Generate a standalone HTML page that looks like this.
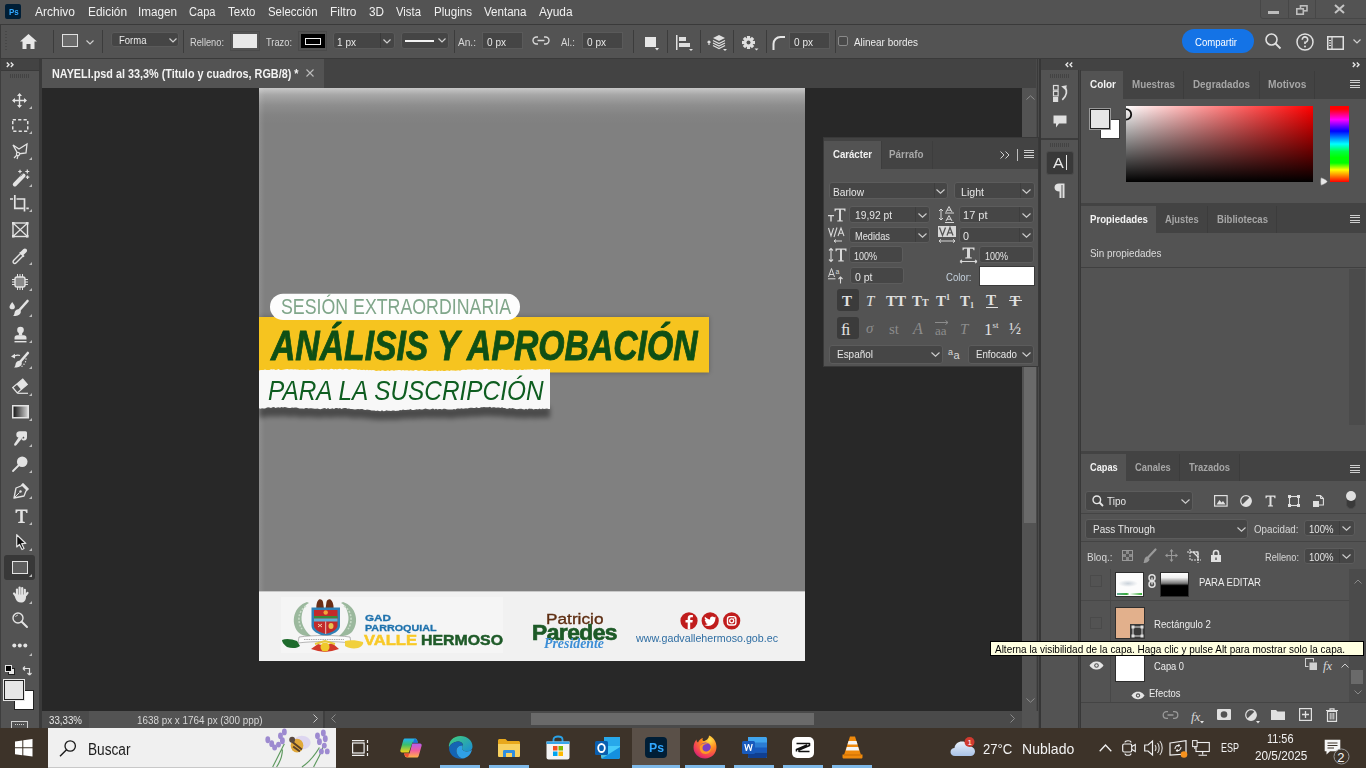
<!DOCTYPE html>
<html><head><meta charset="utf-8">
<style>
*{margin:0;padding:0;box-sizing:border-box}
html,body{width:1366px;height:768px;overflow:hidden;background:#535353;font-family:"Liberation Sans",sans-serif;color:#e6e6e6}
.a{position:absolute}
.t{position:absolute;white-space:nowrap}
svg{position:absolute;overflow:visible}
.sep{position:absolute;top:30px;width:1px;height:23px;background:#3c3c3c}
.fld{position:absolute;top:32px;height:15px;background:#454545;border:1px solid #5a5a5a;border-radius:3px}
.fld2{position:absolute;top:32px;height:17px;background:#454545;border:1px solid #5a5a5a}
.ot{color:#e8e8e8}
.ol{color:#d6d6d6}
.dd{background:#464646;border:1px solid #5c5c5c}
.mi{color:#f0f0f0}
</style></head><body>

<!-- MENU BAR -->
<div class="a" style="left:0;top:0;width:1366px;height:23px;background:#535353"></div>
<div class="a" style="left:0;top:24px;width:1366px;height:1px;background:#3a3a3a"></div>
<div class="a" style="left:5px;top:4px;width:16px;height:15px;background:#001e36;border-radius:2px"></div>
<div class="t" style="top:7.70px;font-size:8.5px;line-height:1;left:8.5px;font-weight:bold;color:#31a8ff;transform:scaleX(0.9417);transform-origin:0 0">Ps</div>


<div class="t mi" style="top:6.42px;font-size:12.5px;line-height:1;left:35px;transform:scaleX(0.9595);transform-origin:0 0">Archivo</div><div class="t mi" style="top:6.42px;font-size:12.5px;line-height:1;left:87.5px;transform:scaleX(0.9512);transform-origin:0 0">Edición</div><div class="t mi" style="top:6.42px;font-size:12.5px;line-height:1;left:137.5px;transform:scaleX(0.9352);transform-origin:0 0">Imagen</div><div class="t mi" style="top:6.42px;font-size:12.5px;line-height:1;left:189px;transform:scaleX(0.8866);transform-origin:0 0">Capa</div><div class="t mi" style="top:6.42px;font-size:12.5px;line-height:1;left:228px;transform:scaleX(0.9200);transform-origin:0 0">Texto</div><div class="t mi" style="top:6.42px;font-size:12.5px;line-height:1;left:268px;transform:scaleX(0.9132);transform-origin:0 0">Selección</div><div class="t mi" style="top:6.42px;font-size:12.5px;line-height:1;left:330px;transform:scaleX(0.9539);transform-origin:0 0">Filtro</div><div class="t mi" style="top:6.42px;font-size:12.5px;line-height:1;left:369px;transform:scaleX(0.9384);transform-origin:0 0">3D</div><div class="t mi" style="top:6.42px;font-size:12.5px;line-height:1;left:396px;transform:scaleX(0.9065);transform-origin:0 0">Vista</div><div class="t mi" style="top:6.42px;font-size:12.5px;line-height:1;left:434px;transform:scaleX(0.9268);transform-origin:0 0">Plugins</div><div class="t mi" style="top:6.42px;font-size:12.5px;line-height:1;left:484px;transform:scaleX(0.9261);transform-origin:0 0">Ventana</div><div class="t mi" style="top:6.42px;font-size:12.5px;line-height:1;left:539px;transform:scaleX(0.9512);transform-origin:0 0">Ayuda</div>
<!-- OPTIONS BAR -->
<div class="a" style="left:0;top:25px;width:1366px;height:33px;background:#535353"></div><div class="a" style="left:0;top:25px;width:1px;height:33px;background:#3a3a3a"></div>
<div class="a" style="left:0;top:58px;width:1366px;height:1px;background:#3a3a3a"></div>


<!-- options content -->
<div class="a" style="left:5px;top:31px;width:2px;height:20px;background:repeating-linear-gradient(#474747 0 1px,transparent 1px 3px)"></div>
<svg style="left:20px;top:34px" width="17" height="15" viewBox="0 0 17 15"><path d="M8.5 0 L17 7.5 L14.5 7.5 L14.5 15 L10.5 15 L10.5 10 L6.5 10 L6.5 15 L2.5 15 L2.5 7.5 L0 7.5 Z" fill="#e8e8e8"/></svg>
<div class="sep" style="left:53px"></div>
<div class="a" style="left:62px;top:34px;width:16px;height:13px;border:1.5px solid #e0e0e0;background:#6a6a6a"></div>
<svg style="left:86px;top:40px" width="8" height="5"><path d="M0.5 0.5 L4 4 L7.5 0.5" stroke="#cfcfcf" stroke-width="1.2" fill="none"/></svg>
<div class="sep" style="left:102px"></div>
<div class="fld" style="left:111px;width:68px"></div>
<div class="t ot" style="top:35.19px;font-size:11px;line-height:1;left:119px;color:#eaeaea;transform:scaleX(0.8653);transform-origin:0 0">Forma</div>
<svg style="left:169px;top:38px" width="8" height="5"><path d="M0.5 0.5 L4 4 L7.5 0.5" stroke="#cfcfcf" stroke-width="1.2" fill="none"/></svg>
<div class="sep" style="left:183px"></div>
<div class="t ol" style="top:36.69px;font-size:11px;line-height:1;left:190px;transform:scaleX(0.8424);transform-origin:0 0">Relleno:</div>
<div class="a" style="left:230px;top:31px;width:30px;height:20px;border:1px solid #4a4a4a;background:#535353"></div>
<div class="a" style="left:233px;top:34px;width:24px;height:14px;background:#e8e8e8"></div>
<div class="t ol" style="top:36.69px;font-size:11px;line-height:1;left:266px;transform:scaleX(0.8451);transform-origin:0 0">Trazo:</div>
<div class="a" style="left:298px;top:31px;width:29px;height:20px;border:1px solid #4a4a4a"></div>
<div class="a" style="left:301px;top:34px;width:24px;height:14px;background:#000"></div>
<div class="a" style="left:305px;top:38px;width:16px;height:7px;border:1.5px solid #f0f0f0"></div>
<div class="fld" style="left:333px;width:62px;top:32px;height:17px"></div>
<div class="a" style="left:380px;top:33px;width:1px;height:15px;background:#3a3a3a"></div>
<div class="t ot" style="top:36.69px;font-size:11px;line-height:1;left:337px;transform:scaleX(0.9136);transform-origin:0 0">1 px</div>
<svg style="left:383px;top:39px" width="8" height="5"><path d="M0.5 0.5 L4 4 L7.5 0.5" stroke="#cfcfcf" stroke-width="1.2" fill="none"/></svg>
<div class="fld" style="left:401px;width:48px;top:32px;height:17px"></div>
<div class="a" style="left:405px;top:40px;width:29px;height:2px;background:#f2f2f2"></div>
<svg style="left:438px;top:38px" width="8" height="5"><path d="M0.5 0.5 L4 4 L7.5 0.5" stroke="#cfcfcf" stroke-width="1.2" fill="none"/></svg>
<div class="sep" style="left:454px"></div>
<div class="t ol" style="top:36.69px;font-size:11px;line-height:1;left:458px;transform:scaleX(0.9194);transform-origin:0 0">An.:</div>
<div class="fld2" style="left:482px;width:41px"></div>
<div class="t ot" style="top:36.69px;font-size:11px;line-height:1;left:487px;transform:scaleX(0.9136);transform-origin:0 0">0 px</div>
<svg style="left:533px;top:36px" width="16" height="9" viewBox="0 0 16 9"><path d="M5 1 H3.5 A3.5 3.5 0 0 0 3.5 8 H5 M11 1 H12.5 A3.5 3.5 0 0 1 12.5 8 H11 M4.5 4.5 H11.5" stroke="#d8d8d8" stroke-width="1.4" fill="none"/></svg>
<div class="t ol" style="top:36.69px;font-size:11px;line-height:1;left:561px;transform:scaleX(0.8802);transform-origin:0 0">Al.:</div>
<div class="fld2" style="left:582px;width:41px"></div>
<div class="t ot" style="top:36.69px;font-size:11px;line-height:1;left:587px;transform:scaleX(0.9136);transform-origin:0 0">0 px</div>
<div class="sep" style="left:633px"></div>
<div class="a" style="left:645px;top:37px;width:11px;height:10px;background:#e6e6e6"></div>
<svg style="left:655px;top:48px" width="4" height="3"><path d="M0 0H4L2 2.5Z" fill="#e6e6e6"/></svg>
<div class="sep" style="left:667px"></div>
<svg style="left:676px;top:35px" width="17" height="16" viewBox="0 0 17 16"><rect x="0" y="0" width="1.5" height="15" fill="#e0e0e0"/><rect x="3" y="2" width="7" height="4" fill="#e0e0e0"/><rect x="3" y="8" width="11" height="4" fill="#e0e0e0"/><path d="M13 14H17L15 16Z" fill="#e0e0e0"/></svg>
<div class="sep" style="left:700px"></div>
<svg style="left:707px;top:34px" width="20" height="17" viewBox="0 0 20 17"><path d="M2 7 L2 11 M0.5 8.5 L2 7 L3.5 8.5" stroke="#e0e0e0" stroke-width="1.2" fill="none"/><path d="M12 1 L18 4 L12 7 L6 4 Z" fill="#e0e0e0"/><path d="M6 6.5 L12 9.5 L18 6.5 M6 9 L12 12 L18 9 M6 11.5 L12 14.5 L18 11.5" stroke="#e0e0e0" stroke-width="1.2" fill="none"/><path d="M16 15H20L18 17Z" fill="#e0e0e0"/></svg>
<div class="sep" style="left:733px"></div>
<svg style="left:742px;top:36px" width="17" height="15" viewBox="0 0 17 15"><g transform="translate(6.5,6.5)" fill="#e0e0e0"><circle r="4.6"/><rect x="-1.6" y="-6.5" width="3.2" height="13"/><rect x="-6.5" y="-1.6" width="13" height="3.2"/><rect x="-1.6" y="-6.5" width="3.2" height="13" transform="rotate(45)"/><rect x="-1.6" y="-6.5" width="3.2" height="13" transform="rotate(-45)"/></g><circle cx="6.5" cy="6.5" r="2" fill="#535353"/><path d="M12.5 12.5H16.5L14.5 14.5Z" fill="#e0e0e0"/></svg>
<div class="sep" style="left:766px"></div>
<svg style="left:772px;top:35px" width="14" height="15" viewBox="0 0 14 15"><path d="M1.5 15 V9 A7 7 0 0 1 8.5 2 H13" stroke="#e6e6e6" stroke-width="2" fill="none"/></svg>
<div class="fld2" style="left:789px;width:41px"></div>
<div class="t ot" style="top:36.69px;font-size:11px;line-height:1;left:794px;transform:scaleX(0.9136);transform-origin:0 0">0 px</div>
<div class="sep" style="left:835px"></div>
<div class="a" style="left:838px;top:36px;width:10px;height:10px;border:1px solid #8a8a8a;border-radius:2px;background:#4a4a4a"></div>
<div class="t ol" style="top:36.69px;font-size:11px;line-height:1;left:854px;color:#ececec;transform:scaleX(0.9022);transform-origin:0 0">Alinear bordes</div>
<div class="a" style="left:1182px;top:29px;width:72px;height:24px;background:#1473e6;border-radius:12px"></div>
<div class="t" style="top:36.69px;font-size:11px;line-height:1;left:1195px;color:#fff;transform:scaleX(0.8696);transform-origin:0 0">Compartir</div>
<svg style="left:1265px;top:33px" width="17" height="17" viewBox="0 0 17 17"><circle cx="6.5" cy="6.5" r="5.5" stroke="#e0e0e0" stroke-width="1.6" fill="none"/><path d="M10.5 10.5 L15.5 15.5" stroke="#e0e0e0" stroke-width="1.8"/></svg>
<svg style="left:1296px;top:33px" width="18" height="18" viewBox="0 0 18 18"><circle cx="9" cy="9" r="8" stroke="#e0e0e0" stroke-width="1.5" fill="none"/><path d="M6.3 6.8 A2.7 2.7 0 1 1 9 9.3 V11" stroke="#e0e0e0" stroke-width="1.6" fill="none"/><circle cx="9" cy="13.4" r="1" fill="#e0e0e0"/></svg>
<svg style="left:1327px;top:36px" width="17" height="14" viewBox="0 0 17 14"><rect x="0.75" y="0.75" width="15.5" height="12.5" stroke="#e0e0e0" stroke-width="1.5" fill="none"/><path d="M5 1V13" stroke="#e0e0e0" stroke-width="1.2"/><rect x="2" y="4" width="2" height="1" fill="#e0e0e0"/><rect x="2" y="6.5" width="2" height="1" fill="#e0e0e0"/><rect x="2" y="9" width="2" height="1" fill="#e0e0e0"/></svg>
<svg style="left:1353px;top:39px" width="8" height="5"><path d="M0.5 0.5 L4 4 L7.5 0.5" stroke="#cfcfcf" stroke-width="1.2" fill="none"/></svg>
<!-- window controls -->
<div class="a" style="left:1260px;top:-1px;width:107px;height:20px;border:1px solid #474747;border-radius:0 0 0 3px"></div>
<div class="a" style="left:1288px;top:0;width:1px;height:18px;background:#474747"></div>
<div class="a" style="left:1315px;top:0;width:1px;height:18px;background:#474747"></div>
<div class="a" style="left:1268px;top:11px;width:11px;height:3px;background:#bdbdbd"></div>
<svg style="left:1296px;top:5px" width="12" height="10" viewBox="0 0 12 10"><rect x="4.5" y="0.8" width="6.5" height="5" stroke="#bdbdbd" stroke-width="1.6" fill="none"/><rect x="0.8" y="3.8" width="6.5" height="5.4" stroke="#bdbdbd" stroke-width="1.6" fill="#535353"/></svg>
<svg style="left:1334px;top:4px" width="11" height="10" viewBox="0 0 11 10"><path d="M1 1 L10 9 M10 1 L1 9" stroke="#c4c4c4" stroke-width="2"/></svg>

<!-- TOOLBAR -->
<div class="a" style="left:0;top:59px;width:41px;height:669px;background:#535353"></div><div class="a" style="left:0;top:59px;width:1px;height:669px;background:#3e3e3e"></div>
<div class="a" style="left:1px;top:59px;width:39px;height:11px;background:#434343"></div><div class="a" style="left:1px;top:70px;width:39px;height:1px;background:#3a3a3a"></div>
<div class="a" style="left:39px;top:59px;width:3px;height:669px;background:#3a3a3a"></div>

<svg style="left:5.5px;top:61.8px" width="9" height="6" viewBox="0 0 9 6"><path d="M0.8 0.6L3 2.8L0.8 5M4.8 0.6L7 2.8L4.8 5" stroke="#e8e8e8" stroke-width="1.4" fill="none"/></svg>
<div class="a" style="left:10px;top:74px;width:20px;height:4px;background:repeating-linear-gradient(90deg,#434343 0 1px,transparent 1px 2px)"></div>
<svg style="left:12px;top:93px" width="16" height="16" viewBox="0 0 16 16"><path d="M7.5 1V14M1 7.5H14" stroke="#e3e3e3" stroke-width="1.4"/><path d="M7.5 0L10 3H5Z M7.5 15L10 12H5Z M0 7.5L3 5V10Z M15 7.5L12 5V10Z" fill="#e3e3e3"/></svg><svg style="left:29px;top:106px" width="3" height="3"><path d="M3 0V3H0Z" fill="#bdbdbd"/></svg>
<svg style="left:12px;top:119px" width="17" height="14" viewBox="0 0 17 14"><rect x="0.75" y="0.75" width="15" height="11.5" stroke="#e3e3e3" stroke-width="1.5" fill="none" stroke-dasharray="3.2 2.2"/></svg><svg style="left:29px;top:131px" width="3" height="3"><path d="M3 0V3H0Z" fill="#bdbdbd"/></svg>
<svg style="left:12px;top:143px" width="17" height="17" viewBox="0 0 17 17"><path d="M1 2 L7 6 L15 1 L14 10 L6 11 L1 2Z" stroke="#e3e3e3" stroke-width="1.3" fill="none"/><circle cx="6" cy="11" r="1.6" stroke="#e3e3e3" stroke-width="1.2" fill="#535353"/><path d="M5 12 L2 15 M6 13 L5 16" stroke="#e3e3e3" stroke-width="1.2"/></svg><svg style="left:29px;top:157px" width="3" height="3"><path d="M3 0V3H0Z" fill="#bdbdbd"/></svg>
<svg style="left:12px;top:169px" width="18" height="18" viewBox="0 0 18 18"><path d="M2.8 15.5 L11.5 6.5" stroke="#e3e3e3" stroke-width="4" stroke-linecap="round"/><path d="M8.5 7.5 L10.8 5.2" stroke="#8a8a8a" stroke-width="1"/><path d="M8 0.8v3.5M6.2 2.5h3.5M15.3 0.5v4M13.3 2.5h4M15.5 6.5v3.5M13.8 8.2h3.5" stroke="#e3e3e3" stroke-width="1.2"/></svg><svg style="left:29px;top:184px" width="3" height="3"><path d="M3 0V3H0Z" fill="#bdbdbd"/></svg>
<svg style="left:10px;top:195px" width="19" height="17" viewBox="0 0 19 17"><path d="M0 4H3M4.8 0V13.4H13.5M6.5 4H14.5V16.5M16.3 13.4H18.8" stroke="#e3e3e3" stroke-width="1.7" fill="none"/></svg><svg style="left:29px;top:209px" width="3" height="3"><path d="M3 0V3H0Z" fill="#bdbdbd"/></svg>
<svg style="left:12px;top:222px" width="17" height="16" viewBox="0 0 17 16"><rect x="1" y="1" width="14.5" height="13.5" stroke="#e3e3e3" stroke-width="1.4" fill="none"/><path d="M1 1L15.5 14.5M15.5 1L1 14.5" stroke="#e3e3e3" stroke-width="1.2"/><rect x="0" y="0" width="2.5" height="2.5" fill="#e3e3e3"/><rect x="14" y="0" width="2.5" height="2.5" fill="#e3e3e3"/><rect x="0" y="13" width="2.5" height="2.5" fill="#e3e3e3"/><rect x="14" y="13" width="2.5" height="2.5" fill="#e3e3e3"/></svg>
<svg style="left:12px;top:248px" width="16" height="17" viewBox="0 0 16 17"><path d="M8.8 5.2 L1.8 12.2 C1 13 1 14.2 1.5 15 C2.3 15.6 3.5 15.5 4.2 14.8 L11.2 7.8" stroke="#e3e3e3" stroke-width="1.4" fill="none"/><path d="M7.2 4.8 L11.5 9.2 L12.6 8.1 L11.5 7 L14.3 4.2 C15.3 3.2 15.3 1.8 14.4 1 C13.5 0.1 12.1 0.2 11.2 1.2 L8.5 3.9 L8.3 3.7Z" fill="#e3e3e3"/></svg><svg style="left:29px;top:262px" width="3" height="3"><path d="M3 0V3H0Z" fill="#bdbdbd"/></svg>
<svg style="left:12px;top:274px" width="16" height="16" viewBox="0 0 16 16"><rect x="3" y="3" width="10" height="10" rx="2" fill="#8a8a8a" stroke="#e3e3e3" stroke-width="1.4"/><path d="M5.5 0v3M8 0v3M10.5 0v3M5.5 13v3M8 13v3M10.5 13v3M0 5.5h3M0 8h3M0 10.5h3M13 5.5h3M13 8h3M13 10.5h3" stroke="#e3e3e3" stroke-width="1"/></svg><svg style="left:29px;top:288px" width="3" height="3"><path d="M3 0V3H0Z" fill="#bdbdbd"/></svg>
<svg style="left:9px;top:300px" width="20" height="17" viewBox="0 0 20 17"><path d="M3.2 2 C1.3 4.5 0.5 6 0.5 7 C0.5 8.4 1.7 9.3 3.2 9.3 C4.7 9.3 5.9 8.4 5.9 7 C5.9 6 5.1 4.5 3.2 2Z" fill="#e3e3e3"/><path d="M18.5 1 L10.5 10" stroke="#e3e3e3" stroke-width="2.6" stroke-linecap="round"/><path d="M9.5 9.2 C7 9.2 5.8 11 5.5 13 C5.3 14.5 4.8 15.5 4 16 C7.5 16.5 11.5 15 11.8 12 C12 10.5 11 9.2 9.5 9.2Z" fill="#e3e3e3"/></svg><svg style="left:29px;top:314px" width="3" height="3"><path d="M3 0V3H0Z" fill="#bdbdbd"/></svg>
<svg style="left:13px;top:326px" width="15" height="17" viewBox="0 0 15 17"><circle cx="7.5" cy="4" r="3.3" fill="#e3e3e3"/><rect x="5.8" y="5" width="3.4" height="4.5" fill="#e3e3e3"/><path d="M1.5 12 C1.5 10.2 2.5 9.3 4 9.3 H11 C12.5 9.3 13.5 10.2 13.5 12 V13.5 H1.5Z" fill="#e3e3e3"/><rect x="1.5" y="15" width="12" height="1.4" fill="#e3e3e3"/></svg><svg style="left:29px;top:340px" width="3" height="3"><path d="M3 0V3H0Z" fill="#bdbdbd"/></svg>
<svg style="left:10px;top:352px" width="19" height="16" viewBox="0 0 19 16"><path d="M1 4.5 L5 1.8 L5 6.5Z" fill="#e3e3e3"/><path d="M4.5 4 C6.5 3 8.5 3 10 3.5" stroke="#e3e3e3" stroke-width="1.3" fill="none"/><path d="M17.8 1 L10.5 9.5" stroke="#e3e3e3" stroke-width="2.6" stroke-linecap="round"/><path d="M9.5 8.8 C7 8.8 5.8 10.6 5.5 12.6 C5.3 14 4.8 15 4 15.5 C7.5 16 11.5 14.5 11.8 11.6 C12 10.1 11 8.8 9.5 8.8Z" fill="#e3e3e3"/><circle cx="16" cy="7" r="0.7" fill="#e3e3e3"/><circle cx="15.5" cy="9.8" r="0.7" fill="#e3e3e3"/><circle cx="14" cy="12.3" r="0.7" fill="#e3e3e3"/><circle cx="12" cy="14.3" r="0.7" fill="#e3e3e3"/></svg><svg style="left:29px;top:366px" width="3" height="3"><path d="M3 0V3H0Z" fill="#bdbdbd"/></svg>
<svg style="left:12px;top:379px" width="17" height="16" viewBox="0 0 17 16"><g transform="rotate(-40 8 7)"><rect x="1.5" y="3.5" width="13" height="7" stroke="#e3e3e3" stroke-width="1.3" fill="none"/><rect x="6.5" y="3.5" width="8" height="7" fill="#e3e3e3"/></g><path d="M5.5 14.3H16" stroke="#e3e3e3" stroke-width="1.2"/></svg><svg style="left:29px;top:393px" width="3" height="3"><path d="M3 0V3H0Z" fill="#bdbdbd"/></svg>
<svg style="left:12px;top:405px" width="17" height="14" viewBox="0 0 17 14"><defs><linearGradient id="gg" x1="0" y1="0" x2="1" y2="0"><stop offset="0" stop-color="#111"/><stop offset="1" stop-color="#d8d8d8"/></linearGradient></defs><rect x="0.75" y="0.75" width="15.5" height="12" fill="url(#gg)" stroke="#e3e3e3" stroke-width="1.5"/></svg><svg style="left:29px;top:418px" width="3" height="3"><path d="M3 0V3H0Z" fill="#bdbdbd"/></svg>
<svg style="left:13px;top:431px" width="15" height="16" viewBox="0 0 15 16"><path d="M3.5 2 C4.5 0.5 6 0.3 8 0.3 H12.5 C13.5 0.3 14 1 14 2 V6 C14 8 13 9.5 11 9.5 C10 9.5 9 9 8.5 8.5 L9.5 7 C10 7.5 10.5 7.8 11 7.5 C11.5 7 11.5 6 10.5 5.5 L3.5 14 C3 14.8 2 15 1.5 14.5 C1 14 1 13.2 1.5 12.5 L5.5 6.5 C4 6.5 2.8 5 3.5 2Z" fill="#e3e3e3"/></svg><svg style="left:29px;top:444px" width="3" height="3"><path d="M3 0V3H0Z" fill="#bdbdbd"/></svg>
<svg style="left:12px;top:456px" width="16" height="16" viewBox="0 0 16 16"><circle cx="10.2" cy="5.8" r="5.3" fill="#e3e3e3"/><path d="M6.5 9.5 L1 15" stroke="#e3e3e3" stroke-width="1.8" stroke-linecap="round"/></svg><svg style="left:29px;top:470px" width="3" height="3"><path d="M3 0V3H0Z" fill="#bdbdbd"/></svg>
<svg style="left:13px;top:483px" width="16" height="16" viewBox="0 0 16 16"><path d="M10 0.8 L15.2 6 L13 8 L11 13 L1 15 L3 5 L8 3Z" stroke="#e3e3e3" stroke-width="1.3" fill="none" stroke-linejoin="round"/><path d="M10 0.8 L15.2 6 L13.5 7.5 L8.5 2.5Z" fill="#e3e3e3"/><path d="M1.5 14.5 L6.5 9.5" stroke="#e3e3e3" stroke-width="1"/><circle cx="7.5" cy="8.5" r="1.2" fill="#e3e3e3"/></svg><svg style="left:29px;top:496px" width="3" height="3"><path d="M3 0V3H0Z" fill="#bdbdbd"/></svg>
<svg style="left:15px;top:509px" width="13" height="14" viewBox="0 0 13 14"><path d="M0.5 0.5H12.5V4H11.3C11 2.3 10.3 2 8.5 2H7.8V12.5L9.8 13V14H3.2V13L5.2 12.5V2H4.5C2.7 2 2 2.3 1.7 4H0.5Z" fill="#e3e3e3"/></svg><svg style="left:29px;top:522px" width="3" height="3"><path d="M3 0V3H0Z" fill="#bdbdbd"/></svg>
<svg style="left:16px;top:534px" width="11" height="16" viewBox="0 0 11 16"><path d="M0.7 0.7 L0.7 13 L3.5 10.5 L6 15.5 L8 14.5 L5.7 9.7 L9.8 9.5Z" fill="#111" stroke="#e3e3e3" stroke-width="1.2" stroke-linejoin="round"/></svg><svg style="left:29px;top:548px" width="3" height="3"><path d="M3 0V3H0Z" fill="#bdbdbd"/></svg>
<div class="a" style="left:4px;top:555px;width:31px;height:25px;background:#383838;border-radius:3px"></div>
<div class="a" style="left:12px;top:561px;width:16px;height:13px;border:1.5px solid #e3e3e3;background:#5e5e5e"></div><svg style="left:29px;top:574px" width="3" height="3"><path d="M3 0V3H0Z" fill="#bdbdbd"/></svg>
<svg style="left:12px;top:586px" width="17" height="17" viewBox="0 0 17 17"><g stroke="#e3e3e3" stroke-width="2.2" stroke-linecap="round"><path d="M5 9V3.5"/><path d="M7.6 8.5V1.5"/><path d="M10.2 8.5V2"/><path d="M12.8 9V3.8"/><path d="M5 11L2 7.5"/></g><path d="M3.8 8.5 H14 V11 C14 14.5 12 16.5 9 16.5 C6 16.5 4.5 15 3.5 12.5 L2.5 9.5Z" fill="#e3e3e3"/><path d="M14 9 L15.5 6.8" stroke="#e3e3e3" stroke-width="2.2" stroke-linecap="round"/></svg><svg style="left:29px;top:601px" width="3" height="3"><path d="M3 0V3H0Z" fill="#bdbdbd"/></svg>
<svg style="left:12px;top:612px" width="16" height="16" viewBox="0 0 16 16"><circle cx="6" cy="6" r="5" stroke="#e3e3e3" stroke-width="1.4" fill="none"/><path d="M9.7 9.7 L15 15" stroke="#e3e3e3" stroke-width="2" stroke-linecap="round"/><path d="M3.5 5 A3 3 0 0 1 6 3" stroke="#e3e3e3" stroke-width="0.8" fill="none"/></svg>
<svg style="left:12px;top:643px" width="16" height="6" viewBox="0 0 16 6"><circle cx="2.3" cy="2.5" r="2" fill="#e3e3e3"/><circle cx="7.8" cy="2.5" r="2" fill="#e3e3e3"/><circle cx="13.3" cy="2.5" r="2" fill="#e3e3e3"/></svg><svg style="left:29px;top:653px" width="3" height="3"><path d="M3 0V3H0Z" fill="#bdbdbd"/></svg>
<div class="a" style="left:8px;top:668px;width:7px;height:7px;background:#e6e6e6;border:1px solid #222"></div><div class="a" style="left:5px;top:665px;width:7px;height:7px;background:#000;border:1px solid #e6e6e6"></div>
<svg style="left:22px;top:665px" width="11" height="11" viewBox="0 0 11 11"><path d="M1 3.5 H7.5 V10" stroke="#e0e0e0" stroke-width="1.2" fill="none"/><path d="M1 3.5 L3 1.5 M1 3.5 L3 5.5 M7.5 10 L5.5 8 M7.5 10 L9.5 8" stroke="#e0e0e0" stroke-width="1.2"/></svg>
<div class="a" style="left:14px;top:690px;width:20px;height:20px;background:#fff;border:1px solid #222"></div><div class="a" style="left:4px;top:680px;width:20px;height:20px;background:#e6e6e6;border:1px solid #222;outline:1px solid #e6e6e6"></div>
<div class="a" style="left:11px;top:721px;width:17px;height:10px;border:1px solid #d0d0d0;border-bottom:none"></div><div class="a" style="left:15px;top:724px;width:9px;height:4px;border-top:1px dotted #d0d0d0"></div>
<!-- TAB BAR -->
<div class="a" style="left:42px;top:59px;width:996px;height:29px;background:#434343"></div>
<div class="a" style="left:42px;top:59px;width:282px;height:29px;background:#535353"></div>


<div class="t" style="top:68.24px;font-size:12px;line-height:1;left:52px;color:#f2f2f2;font-weight:bold;transform:scaleX(0.9016);transform-origin:0 0">NAYELI.psd al 33,3% (Titulo y cuadros, RGB/8) *</div>
<svg style="left:306px;top:69px" width="8" height="8" viewBox="0 0 8 8"><path d="M0.5 0.5L7.5 7.5M7.5 0.5L0.5 7.5" stroke="#bdbdbd" stroke-width="1.1"/></svg>

<!-- PASTEBOARD -->
<div class="a" style="left:42px;top:88px;width:980px;height:623px;background:#282828"></div>

<!-- CANVAS -->

<div class="a" style="left:259px;top:88px;width:546px;height:573px;background:#808080;overflow:hidden">
 <div class="a" style="left:0;top:0;width:546px;height:40px;background:linear-gradient(#c8c8c8 0px,#a6a6a6 7px,#8e8e8e 17px,#838383 27px,#808080 36px)"></div>
 <div class="a" style="left:0;top:0;width:6px;height:573px;background:linear-gradient(90deg,rgba(255,255,255,0.10),rgba(255,255,255,0))"></div>
 <div class="a" style="left:0;top:204px;width:546px;height:14px;background:rgba(0,0,0,0)"></div>
 <svg style="left:0;top:0" width="546" height="573">
  <defs><filter id="sh" x="-10%" y="-30%" width="120%" height="160%"><feGaussianBlur stdDeviation="2.5"/></filter></defs>
  <rect x="0" y="229" width="450" height="56" fill="#000" opacity="0.25" filter="url(#sh)"/>
  <rect x="0" y="229" width="450" height="55.5" fill="#f6c41f"/>
  <polygon points="0.0,318.3 1.5,318.7 3.0,318.3 4.5,318.4 6.0,318.6 7.5,317.7 9.0,317.3 10.5,317.5 12.0,317.9 13.5,317.2 15.0,317.1 16.5,317.9 18.0,317.6 19.5,317.3 21.0,317.8 22.5,317.1 24.0,317.5 25.5,317.0 27.0,317.3 28.5,317.8 30.0,317.9 31.5,318.0 33.0,317.4 34.5,317.7 36.0,317.5 37.5,317.4 39.0,317.9 40.5,318.4 42.0,318.5 43.5,318.4 45.0,318.8 46.5,318.1 48.0,318.0 49.5,318.4 51.0,318.3 52.5,318.2 54.0,318.5 55.5,318.8 57.0,318.7 58.5,318.5 60.0,319.1 61.5,319.3 63.0,318.7 64.5,318.2 66.0,318.1 67.5,319.1 69.0,318.1 70.5,318.9 72.0,318.7 73.5,318.3 75.0,318.9 76.5,317.9 78.0,318.1 79.5,318.4 81.0,317.9 82.5,318.9 84.0,318.2 85.5,318.1 87.0,318.0 88.5,318.8 90.0,318.6 91.5,318.9 93.0,319.0 94.5,319.3 96.0,319.6 97.5,319.3 99.0,318.9 100.5,319.3 102.0,319.1 103.5,319.0 105.0,319.7 106.5,320.1 108.0,319.6 109.5,319.8 111.0,320.0 112.5,320.5 114.0,320.4 115.5,320.6 117.0,320.9 118.5,320.5 120.0,321.0 121.5,321.2 123.0,320.3 124.5,321.3 126.0,321.0 127.5,320.3 129.0,320.7 130.5,320.8 132.0,321.1 133.5,320.4 135.0,320.6 136.5,320.9 138.0,320.7 139.5,320.8 141.0,320.1 142.5,320.2 144.0,319.6 145.5,320.1 147.0,320.1 148.5,319.8 150.0,319.8 151.5,319.1 153.0,319.9 154.5,319.9 156.0,319.8 157.5,319.3 159.0,319.5 160.5,318.9 162.0,319.6 163.5,319.5 165.0,318.9 166.5,318.6 168.0,319.0 169.5,319.2 171.0,319.4 172.5,319.1 174.0,318.6 175.5,319.6 177.0,318.7 178.5,319.6 180.0,318.9 181.5,319.1 183.0,319.6 184.5,318.8 186.0,318.8 187.5,319.3 189.0,319.5 190.5,319.6 192.0,319.4 193.5,319.6 195.0,319.0 196.5,319.5 198.0,318.4 199.5,318.5 201.0,318.7 202.5,318.3 204.0,318.8 205.5,318.5 207.0,318.3 208.5,318.6 210.0,318.1 211.5,317.7 213.0,317.7 214.5,318.1 216.0,318.1 217.5,317.2 219.0,317.9 220.5,317.9 222.0,317.3 223.5,317.3 225.0,316.9 226.5,317.2 228.0,317.2 229.5,317.3 231.0,316.7 232.5,317.8 234.0,317.3 235.5,317.3 237.0,317.8 238.5,317.6 240.0,317.6 241.5,318.0 243.0,317.3 244.5,318.0 246.0,317.9 247.5,318.7 249.0,318.8 250.5,318.1 252.0,318.5 253.5,318.1 255.0,318.6 256.5,319.1 258.0,319.3 259.5,318.9 261.0,318.8 262.5,318.7 264.0,319.2 265.5,319.6 267.0,318.7 268.5,319.5 270.0,318.6 271.5,318.8 273.0,318.8 274.5,319.4 276.0,318.9 277.5,318.9 279.0,319.2 280.5,318.6 282.0,319.3 283.5,318.5 285.0,319.0 286.5,318.7 288.0,318.6 289.5,319.0 291.0,318.9 291.0,329.9 289.5,330.0 288.0,329.6 286.5,329.7 285.0,330.0 283.5,329.5 282.0,330.3 280.5,329.6 279.0,330.2 277.5,329.9 276.0,329.9 274.5,330.4 273.0,329.8 271.5,329.8 270.0,329.6 268.5,330.5 267.0,329.7 265.5,330.6 264.0,330.2 262.5,329.7 261.0,329.8 259.5,329.9 258.0,330.3 256.5,330.1 255.0,329.6 253.5,329.1 252.0,329.5 250.5,329.1 249.0,329.8 247.5,329.7 246.0,328.9 244.5,329.0 243.0,328.3 241.5,329.0 240.0,328.6 238.5,328.6 237.0,328.8 235.5,328.3 234.0,328.3 232.5,328.8 231.0,327.7 229.5,328.3 228.0,328.2 226.5,328.2 225.0,327.9 223.5,328.3 222.0,328.3 220.5,328.9 219.0,328.9 217.5,328.2 216.0,329.1 214.5,329.1 213.0,328.7 211.5,328.7 210.0,329.1 208.5,329.6 207.0,329.3 205.5,329.5 204.0,329.8 202.5,329.3 201.0,329.7 199.5,329.5 198.0,329.4 196.5,330.5 195.0,330.0 193.5,330.6 192.0,330.4 190.5,330.6 189.0,330.5 187.5,330.3 186.0,329.8 184.5,329.8 183.0,330.6 181.5,330.1 180.0,329.9 178.5,330.6 177.0,329.7 175.5,330.6 174.0,329.6 172.5,330.1 171.0,330.4 169.5,330.2 168.0,330.0 166.5,329.6 165.0,329.9 163.5,330.5 162.0,330.6 160.5,329.9 159.0,330.5 157.5,330.3 156.0,330.8 154.5,330.9 153.0,330.9 151.5,330.1 150.0,330.8 148.5,330.8 147.0,331.1 145.5,331.1 144.0,330.6 142.5,331.2 141.0,331.1 139.5,331.8 138.0,331.7 136.5,331.9 135.0,331.6 133.5,331.4 132.0,332.1 130.5,331.8 129.0,331.7 127.5,331.3 126.0,332.0 124.5,332.3 123.0,331.3 121.5,332.2 120.0,332.0 118.5,331.5 117.0,331.9 115.5,331.6 114.0,331.4 112.5,331.5 111.0,331.0 109.5,330.8 108.0,330.6 106.5,331.1 105.0,330.7 103.5,330.0 102.0,330.1 100.5,330.3 99.0,329.9 97.5,330.3 96.0,330.6 94.5,330.3 93.0,330.0 91.5,329.9 90.0,329.6 88.5,329.8 87.0,329.0 85.5,329.1 84.0,329.2 82.5,329.9 81.0,328.9 79.5,329.4 78.0,329.1 76.5,328.9 75.0,329.9 73.5,329.3 72.0,329.7 70.5,329.9 69.0,329.1 67.5,330.1 66.0,329.1 64.5,329.2 63.0,329.7 61.5,330.3 60.0,330.1 58.5,329.5 57.0,329.7 55.5,329.8 54.0,329.5 52.5,329.2 51.0,329.3 49.5,329.4 48.0,329.0 46.5,329.1 45.0,329.8 43.5,329.4 42.0,329.5 40.5,329.4 39.0,328.9 37.5,328.4 36.0,328.5 34.5,328.7 33.0,328.4 31.5,329.0 30.0,328.9 28.5,328.8 27.0,328.3 25.5,328.0 24.0,328.5 22.5,328.1 21.0,328.8 19.5,328.3 18.0,328.6 16.5,328.9 15.0,328.1 13.5,328.2 12.0,328.9 10.5,328.5 9.0,328.3 7.5,328.7 6.0,329.6 4.5,329.4 3.0,329.3 1.5,329.7 0.0,329.3" fill="#000" opacity="0.42" filter="url(#sh)"/>
  <polygon points="0.0,282.6 1.5,282.1 3.0,282.1 4.5,282.1 6.0,281.6 7.5,281.9 9.0,281.9 10.5,282.0 12.0,281.3 13.5,281.5 15.0,281.2 16.5,281.9 18.0,281.7 19.5,281.1 21.0,282.0 22.5,281.9 24.0,281.7 25.5,281.6 27.0,281.2 28.5,281.1 30.0,281.6 31.5,281.2 33.0,281.3 34.5,281.4 36.0,281.2 37.5,281.6 39.0,281.6 40.5,282.0 42.0,281.7 43.5,281.8 45.0,281.7 46.5,281.9 48.0,281.7 49.5,281.5 51.0,282.1 52.5,282.1 54.0,281.9 55.5,281.8 57.0,281.4 58.5,281.3 60.0,281.3 61.5,281.1 63.0,281.7 64.5,281.3 66.0,281.6 67.5,281.2 69.0,281.7 70.5,281.5 72.0,280.7 73.5,280.9 75.0,281.5 76.5,281.1 78.0,281.5 79.5,281.0 81.0,280.7 82.5,281.2 84.0,281.4 85.5,280.9 87.0,280.8 88.5,281.1 90.0,281.7 91.5,281.6 93.0,281.0 94.5,281.2 96.0,281.2 97.5,281.2 99.0,281.9 100.5,281.5 102.0,281.9 103.5,281.9 105.0,281.7 106.5,282.3 108.0,281.8 109.5,282.3 111.0,281.9 112.5,282.3 114.0,282.1 115.5,282.2 117.0,282.9 118.5,282.8 120.0,282.4 121.5,282.9 123.0,282.3 124.5,282.5 126.0,282.9 127.5,282.7 129.0,282.2 130.5,283.0 132.0,282.3 133.5,282.3 135.0,282.8 136.5,282.3 138.0,282.3 139.5,282.1 141.0,282.1 142.5,282.5 144.0,282.1 145.5,282.5 147.0,282.2 148.5,282.3 150.0,282.7 151.5,282.3 153.0,282.4 154.5,282.7 156.0,282.1 157.5,282.1 159.0,282.8 160.5,282.7 162.0,282.2 163.5,282.2 165.0,282.7 166.5,283.0 168.0,282.3 169.5,283.0 171.0,283.0 172.5,282.8 174.0,282.7 175.5,282.4 177.0,282.4 178.5,283.2 180.0,282.6 181.5,283.0 183.0,282.6 184.5,283.1 186.0,282.9 187.5,282.6 189.0,282.5 190.5,282.9 192.0,282.3 193.5,282.4 195.0,282.6 196.5,282.8 198.0,282.5 199.5,282.2 201.0,282.7 202.5,281.9 204.0,281.7 205.5,281.8 207.0,281.9 208.5,281.5 210.0,281.5 211.5,281.6 213.0,281.7 214.5,281.3 216.0,281.4 217.5,281.8 219.0,281.9 220.5,281.5 222.0,281.5 223.5,281.4 225.0,281.0 226.5,280.9 228.0,280.8 229.5,281.6 231.0,281.5 232.5,281.7 234.0,280.9 235.5,281.5 237.0,281.3 238.5,281.6 240.0,281.3 241.5,281.9 243.0,281.1 244.5,281.5 246.0,281.7 247.5,281.9 249.0,281.8 250.5,281.8 252.0,281.9 253.5,282.0 255.0,281.5 256.5,281.8 258.0,282.0 259.5,282.0 261.0,281.6 262.5,281.9 264.0,281.9 265.5,281.6 267.0,281.7 268.5,281.4 270.0,281.6 271.5,281.6 273.0,281.1 274.5,281.5 276.0,281.8 277.5,281.7 279.0,281.5 280.5,281.2 282.0,281.5 283.5,281.4 285.0,281.2 286.5,281.6 288.0,280.9 289.5,281.5 291.0,280.9 291.0,320.9 289.5,321.0 288.0,320.6 286.5,320.7 285.0,321.0 283.5,320.5 282.0,321.3 280.5,320.6 279.0,321.2 277.5,320.9 276.0,320.9 274.5,321.4 273.0,320.8 271.5,320.8 270.0,320.6 268.5,321.5 267.0,320.7 265.5,321.6 264.0,321.2 262.5,320.7 261.0,320.8 259.5,320.9 258.0,321.3 256.5,321.1 255.0,320.6 253.5,320.1 252.0,320.5 250.5,320.1 249.0,320.8 247.5,320.7 246.0,319.9 244.5,320.0 243.0,319.3 241.5,320.0 240.0,319.6 238.5,319.6 237.0,319.8 235.5,319.3 234.0,319.3 232.5,319.8 231.0,318.7 229.5,319.3 228.0,319.2 226.5,319.2 225.0,318.9 223.5,319.3 222.0,319.3 220.5,319.9 219.0,319.9 217.5,319.2 216.0,320.1 214.5,320.1 213.0,319.7 211.5,319.7 210.0,320.1 208.5,320.6 207.0,320.3 205.5,320.5 204.0,320.8 202.5,320.3 201.0,320.7 199.5,320.5 198.0,320.4 196.5,321.5 195.0,321.0 193.5,321.6 192.0,321.4 190.5,321.6 189.0,321.5 187.5,321.3 186.0,320.8 184.5,320.8 183.0,321.6 181.5,321.1 180.0,320.9 178.5,321.6 177.0,320.7 175.5,321.6 174.0,320.6 172.5,321.1 171.0,321.4 169.5,321.2 168.0,321.0 166.5,320.6 165.0,320.9 163.5,321.5 162.0,321.6 160.5,320.9 159.0,321.5 157.5,321.3 156.0,321.8 154.5,321.9 153.0,321.9 151.5,321.1 150.0,321.8 148.5,321.8 147.0,322.1 145.5,322.1 144.0,321.6 142.5,322.2 141.0,322.1 139.5,322.8 138.0,322.7 136.5,322.9 135.0,322.6 133.5,322.4 132.0,323.1 130.5,322.8 129.0,322.7 127.5,322.3 126.0,323.0 124.5,323.3 123.0,322.3 121.5,323.2 120.0,323.0 118.5,322.5 117.0,322.9 115.5,322.6 114.0,322.4 112.5,322.5 111.0,322.0 109.5,321.8 108.0,321.6 106.5,322.1 105.0,321.7 103.5,321.0 102.0,321.1 100.5,321.3 99.0,320.9 97.5,321.3 96.0,321.6 94.5,321.3 93.0,321.0 91.5,320.9 90.0,320.6 88.5,320.8 87.0,320.0 85.5,320.1 84.0,320.2 82.5,320.9 81.0,319.9 79.5,320.4 78.0,320.1 76.5,319.9 75.0,320.9 73.5,320.3 72.0,320.7 70.5,320.9 69.0,320.1 67.5,321.1 66.0,320.1 64.5,320.2 63.0,320.7 61.5,321.3 60.0,321.1 58.5,320.5 57.0,320.7 55.5,320.8 54.0,320.5 52.5,320.2 51.0,320.3 49.5,320.4 48.0,320.0 46.5,320.1 45.0,320.8 43.5,320.4 42.0,320.5 40.5,320.4 39.0,319.9 37.5,319.4 36.0,319.5 34.5,319.7 33.0,319.4 31.5,320.0 30.0,319.9 28.5,319.8 27.0,319.3 25.5,319.0 24.0,319.5 22.5,319.1 21.0,319.8 19.5,319.3 18.0,319.6 16.5,319.9 15.0,319.1 13.5,319.2 12.0,319.9 10.5,319.5 9.0,319.3 7.5,319.7 6.0,320.6 4.5,320.4 3.0,320.3 1.5,320.7 0.0,320.3" fill="#f8f8f8"/>
  <rect x="11" y="205.8" width="250" height="26.2" rx="13" fill="#fdfdfd"/>
 </svg>
 <div class="a" style="left:0;top:504px;width:546px;height:69px;background:#f1f1f1"></div>
 <div class="a" style="left:0;top:503px;width:546px;height:1px;background:#c8c8c8"></div>
 <div class="a" style="left:22px;top:509px;width:222px;height:56px;background:#f5f5f5"></div>
</div>



 <div class="t" style="top:297.10px;font-size:21.5px;line-height:1;left:281px;color:#80a68a;letter-spacing:0;transform:scaleX(0.8263);transform-origin:0 0">SESIÓN EXTRAORDINARIA</div>
 <div class="t" style="top:325.15px;font-size:42px;line-height:1;left:271px;color:#0f4f15;font-weight:bold;font-style:italic;-webkit-text-stroke:0.9px #0f4f15;transform:scaleX(0.8028);transform-origin:0 0">ANÁLISIS Y APROBACIÓN</div>
 <div class="t" style="top:376.94px;font-size:27.6px;line-height:1;left:267.5px;color:#0e5d20;font-style:italic;transform:scaleX(0.8836);transform-origin:0 0">PARA LA SUSCRIPCIÓN</div>


 <!-- footer logos -->
 <svg style="left:278px;top:594px" width="90" height="64" viewBox="0 0 90 64">
  <path d="M29 8 C16 12 12 28 20 38 C24 42 28 42 33 42 C26 36 22 28 24 20 C25 15 27 11 31 9Z" fill="#9bb89d"/>
  <path d="M28 12 C20 17 19 28 24 35" stroke="#c9dcc9" stroke-width="1.6" fill="none" stroke-dasharray="2 1.5"/>
  <path d="M65 8 C78 12 82 28 74 38 C70 42 66 42 61 42 C68 36 72 28 70 20 C69 15 67 11 63 9Z" fill="#9bb89d"/>
  <path d="M66 12 C74 17 75 28 70 35" stroke="#c9dcc9" stroke-width="1.6" fill="none" stroke-dasharray="2 1.5"/>
  <path d="M38.5 15 C38 11 39 7 41 5.5 C43 5 44.5 6 45 8 L46 15Z M47.5 15 L48.5 8 C49 6 50.5 5 52.5 5.5 C54.5 7 56 11 55.5 15Z" fill="#6b2e16"/>
  <path d="M33.5 13.5 H62 V32 C62 37 55 40.5 47.7 42.5 C40.5 40.5 33.5 37 33.5 32Z" fill="#2f82b8"/>
  <path d="M36 16 H59.5 V31.5 C59.5 35.5 54 38.5 47.7 40 C41.5 38.5 36 35.5 36 31.5Z" fill="#c22a2a"/>
  <circle cx="47.7" cy="18.5" r="2.2" fill="#f4a63a"/>
  <rect x="36" y="22" width="23.5" height="2.5" fill="#3a8a3a"/>
  <rect x="36" y="24.5" width="23.5" height="3" fill="#62b0d8"/>
  <path d="M47.7 27.5V40" stroke="#f0f0f0" stroke-width="0.8"/>
  <path d="M40 30 L44 33 M44 30 L40 33" stroke="#f0e6c0" stroke-width="0.9"/>
  <ellipse cx="53" cy="32" rx="2.5" ry="3" fill="#e8c050"/>
  <path d="M21 43 C35 41 58 41 72 43 L73 49 C58 47 35 47 20 49Z" fill="#fbfbfb" stroke="#8a8a8a" stroke-width="0.6"/>
  <path d="M26 45.5 H66" stroke="#777" stroke-width="0.6" stroke-dasharray="1.5 0.8"/>
  <path d="M4 46 C8 44 14 45 19 47 L22 52 C20 54 14 55 9 53 C6 51 4 48 4 46Z" fill="#1e6b2c"/>
  <path d="M67 47 C72 46 78 46 85 48 C86 50 83 53 80 54 C75 55 70 54 67 52Z" fill="#f1d03c"/>
  <path d="M33 55 L40 50 L47 52 L54 49 L61 55 L54 57 L47 58 L40 57Z" fill="#d23a2a"/>
  <circle cx="47" cy="53" r="4.5" fill="#f0c92a"/>
  <path d="M37 50 L47 47 L57 50" stroke="#e8c83a" stroke-width="2" fill="none"/>
 </svg>
 <div class="t" style="top:614.41px;font-size:9.2px;line-height:1;left:364.5px;color:#1f72ad;font-weight:bold;-webkit-text-stroke:0.3px #1f72ad;transform:scaleX(1.2731);transform-origin:0 0">GAD</div>
 <div class="t" style="top:623.61px;font-size:9.2px;line-height:1;left:364.5px;color:#1f72ad;font-weight:bold;-webkit-text-stroke:0.3px #1f72ad;transform:scaleX(1.1706);transform-origin:0 0">PARROQUIAL</div>
 <div class="t" style="top:632.30px;font-size:15px;line-height:1;left:364.3px;color:#f8c928;font-weight:bold;-webkit-text-stroke:0.5px #f8c928;transform:scaleX(1.1027);transform-origin:0 0">VALLE</div>
 <div class="t" style="top:632.30px;font-size:15px;line-height:1;left:421px;color:#1e5a28;font-weight:bold;-webkit-text-stroke:0.5px #1e5a28;transform:scaleX(1.0579);transform-origin:0 0">HERMOSO</div>
 <div class="t" style="top:611.18px;font-size:15.5px;line-height:1;left:545.6px;color:#5e2e12;-webkit-text-stroke:0.35px #5e2e12;transform:scaleX(1.1125);transform-origin:0 0">Patricio</div>
 <div class="t" style="top:621.88px;font-size:22px;line-height:1;left:531.7px;color:#1d5a27;font-weight:bold;letter-spacing:-0.5px;-webkit-text-stroke:0.7px #1d5a27;transform:scaleX(1.0350);transform-origin:0 0">Paredes</div>
 <div class="t" style="top:637.15px;font-size:14px;line-height:1;left:543.6px;color:#3d8ed6;font-style:italic;font-family:'Liberation Serif',serif;font-weight:bold;transform:scaleX(0.9892);transform-origin:0 0">Presidente</div>
 <svg style="left:680px;top:612px" width="60" height="18" viewBox="0 0 60 18">
  <circle cx="9" cy="8.8" r="8.6" fill="#c01d1d"/><circle cx="30.2" cy="8.8" r="8.6" fill="#c01d1d"/><circle cx="51.7" cy="8.8" r="8.6" fill="#c01d1d"/>
  <path d="M10.2 17.4 V10.5 H12.4 L12.8 8 H10.2 V6.5 C10.2 5.7 10.5 5.2 11.6 5.2 H12.9 V3 C12.5 3 11.8 2.9 10.9 2.9 C9 2.9 7.7 4 7.7 6.2 V8 H5.5 V10.5 H7.7 V17.4Z" fill="#fff"/>
  <path d="M36.2 5.6 C35.7 5.8 35.2 6 34.7 6 C35.2 5.7 35.6 5.2 35.8 4.6 C35.3 4.9 34.8 5.1 34.2 5.2 C33.2 4.1 31.4 4.2 30.5 5.3 C30 5.9 29.9 6.7 30.1 7.4 C28.1 7.3 26.3 6.4 25 4.8 C24.4 5.9 24.7 7.3 25.8 8 C25.4 8 25 7.9 24.7 7.7 C24.7 8.9 25.5 9.9 26.6 10.2 C26.3 10.3 25.9 10.3 25.5 10.2 C25.8 11.2 26.8 11.9 27.8 11.9 C26.8 12.7 25.5 13 24.3 12.9 C29.2 15.8 35.2 12.6 35.3 7 V6.6 C35.7 6.3 36 6 36.2 5.6Z" fill="#fff"/>
  <rect x="47.5" y="4.6" width="8.4" height="8.4" rx="2.3" stroke="#fff" stroke-width="1.4" fill="none"/><circle cx="51.7" cy="8.8" r="2" stroke="#fff" stroke-width="1.3" fill="none"/><circle cx="54" cy="6.5" r="0.6" fill="#fff"/>
 </svg>
 <div class="t" style="top:632.61px;font-size:10.5px;line-height:1;left:636px;color:#2f6ea3;transform:scaleX(1.0179);transform-origin:0 0">www.gadvallehermoso.gob.ec</div>

<!-- V SCROLL -->
<div class="a" style="left:1022px;top:88px;width:16px;height:623px;background:#535353"></div>
<div class="a" style="left:1036px;top:59px;width:5px;height:669px;background:#3a3a3a;border-left:1px solid #4a4a4a;border-right:2px solid #363636;box-shadow:inset 1px 0 0 #3a3a3a"></div><div class="a" style="left:1038px;top:59px;width:1px;height:669px;background:#4a4a4a"></div>


<svg style="left:1026px;top:95px" width="9" height="5" viewBox="0 0 9 5"><path d="M0.5 4.5L4.5 0.8L8.5 4.5" stroke="#8e8e8e" stroke-width="1" fill="none"/></svg>
<div class="a" style="left:1024px;top:300px;width:12px;height:223px;background:#6a6a6a"></div>
<svg style="left:1026px;top:698px" width="9" height="5" viewBox="0 0 9 5"><path d="M0.5 0.5L4.5 4.2L8.5 0.5" stroke="#8e8e8e" stroke-width="1" fill="none"/></svg>


<!-- CHARACTER PANEL -->
<div class="a" style="left:823px;top:137px;width:216px;height:230px;background:#393939"></div>
<div class="a" style="left:824px;top:138px;width:214px;height:228px;background:#535353"></div>
<div class="a" style="left:824px;top:138px;width:214px;height:31px;background:#434343"></div>
<div class="a" style="left:824px;top:141px;width:57px;height:28px;background:#535353"></div>
<div class="a" style="left:881px;top:141px;width:1px;height:28px;background:#3d3d3d"></div>
<div class="a" style="left:932px;top:141px;width:1px;height:28px;background:#3d3d3d"></div>
<div class="t" style="top:148.89px;font-size:11px;line-height:1;left:833px;color:#f2f2f2;font-weight:bold;transform:scaleX(0.8736);transform-origin:0 0">Carácter</div>
<div class="t" style="top:148.89px;font-size:11px;line-height:1;left:889px;color:#a8a8a8;font-weight:bold;transform:scaleX(0.8954);transform-origin:0 0">Párrafo</div>
<svg style="left:1000px;top:151px" width="10" height="8" viewBox="0 0 10 8"><path d="M0.5 0.5L4 4L0.5 7.5M5.5 0.5L9 4L5.5 7.5" stroke="#d0d0d0" stroke-width="1" fill="none"/></svg>
<div class="a" style="left:1017px;top:149px;width:1px;height:12px;background:#bdbdbd"></div>
<div class="a" style="left:1024px;top:150px;width:10px;height:8px;background:repeating-linear-gradient(#d0d0d0 0 1px,transparent 1px 2.3px)"></div>
<div class="a dd" style="left:829px;top:182px;width:119px;height:17px;border-radius:3px"></div><div class="a" style="left:934px;top:183px;width:1px;height:15px;background:#3e3e3e"></div>
<div class="t" style="top:186.69px;font-size:11px;line-height:1;left:833px;color:#e6e6e6;transform:scaleX(0.9219);transform-origin:0 0">Barlow</div>
<svg style="left:936px;top:189px" width="9" height="5" viewBox="0 0 9 5"><path d="M0.5 0.5L4.5 4.2L8.5 0.5" stroke="#cfcfcf" stroke-width="1.1" fill="none"/></svg>
<div class="a dd" style="left:954px;top:182px;width:81px;height:17px;border-radius:3px"></div><div class="a" style="left:1019.5px;top:183px;width:1px;height:15px;background:#3e3e3e"></div>
<div class="t" style="top:186.69px;font-size:11px;line-height:1;left:960.5px;color:#e6e6e6;transform:scaleX(0.9640);transform-origin:0 0">Light</div>
<svg style="left:1022px;top:189px" width="9" height="5" viewBox="0 0 9 5"><path d="M0.5 0.5L4.5 4.2L8.5 0.5" stroke="#cfcfcf" stroke-width="1.1" fill="none"/></svg>
<svg style="left:828px;top:208px" width="18" height="14" viewBox="0 0 18 14"><path d="M0 7H6V8.2H3.7V13.5H2.3V8.2H0Z M6.5 0.5H17.5V3.3H16.5C16.3 2 15.8 1.8 14.5 1.8H13V12.2L14.8 12.6V13.5H9.2V12.6L11 12.2V1.8H9.5C8.2 1.8 7.7 2 7.5 3.3H6.5Z" fill="#d8d8d8"/></svg>
<div class="a dd" style="left:849px;top:206px;width:81px;height:17px;border-radius:3px"></div><div class="a" style="left:915px;top:207px;width:1px;height:15px;background:#3e3e3e"></div>
<div class="t" style="top:210.49px;font-size:11px;line-height:1;left:854.6px;color:#e6e6e6;transform:scaleX(0.9305);transform-origin:0 0">19,92 pt</div>
<svg style="left:918px;top:213px" width="9" height="5" viewBox="0 0 9 5"><path d="M0.5 0.5L4.5 4.2L8.5 0.5" stroke="#cfcfcf" stroke-width="1.1" fill="none"/></svg>
<svg style="left:938px;top:206px" width="17" height="18" viewBox="0 0 17 18"><path d="M3 3V14M1 5L3 3L5 5M1 12L3 14L5 12" stroke="#d8d8d8" stroke-width="1" fill="none"/><path d="M8 6L11 0.5L14 6M9 4.2H13M7 7H16M8 15L11 9.5L14 15M9 13.2H13M7 16.5H16" stroke="#d8d8d8" stroke-width="1" fill="none"/></svg>
<div class="a dd" style="left:959px;top:206px;width:75px;height:17px;border-radius:3px"></div><div class="a" style="left:1019px;top:207px;width:1px;height:15px;background:#3e3e3e"></div>
<div class="t" style="top:210.49px;font-size:11px;line-height:1;left:963.2px;color:#e6e6e6;transform:scaleX(1.0013);transform-origin:0 0">17 pt</div>
<svg style="left:1022px;top:213px" width="9" height="5" viewBox="0 0 9 5"><path d="M0.5 0.5L4.5 4.2L8.5 0.5" stroke="#cfcfcf" stroke-width="1.1" fill="none"/></svg>
<svg style="left:828px;top:227px" width="18" height="17" viewBox="0 0 18 17"><path d="M0.5 1L3 9L5.5 1M6 10L9 0.5M10 9L13 1L16 9M11 6.3H15" stroke="#d8d8d8" stroke-width="1.1" fill="none"/><path d="M6 14H14M6 14L8 12.5M6 14L8 15.5" stroke="#d8d8d8" stroke-width="1" fill="none"/></svg>
<div class="a dd" style="left:849px;top:227px;width:81px;height:16px;border-radius:3px"></div><div class="a" style="left:915px;top:228px;width:1px;height:14px;background:#3e3e3e"></div>
<div class="t" style="top:230.69px;font-size:11px;line-height:1;left:854.6px;color:#e6e6e6;transform:scaleX(0.8418);transform-origin:0 0">Medidas</div>
<svg style="left:918px;top:233px" width="9" height="5" viewBox="0 0 9 5"><path d="M0.5 0.5L4.5 4.2L8.5 0.5" stroke="#cfcfcf" stroke-width="1.1" fill="none"/></svg>
<svg style="left:938px;top:226px" width="18" height="18" viewBox="0 0 18 18"><rect x="0" y="0" width="18" height="11" fill="#d8d8d8"/><path d="M1.5 1.5L4.5 9.5L7.5 1.5M9 9.5L12 1.5L15 9.5M10 6.8H14" stroke="#535353" stroke-width="1.3" fill="none"/><path d="M1 15H17M1 15L3 13.3M1 15L3 16.7M17 15L15 13.3M17 15L15 16.7" stroke="#d8d8d8" stroke-width="1" fill="none"/></svg>
<div class="a dd" style="left:959px;top:227px;width:75px;height:16px;border-radius:3px"></div><div class="a" style="left:1019px;top:228px;width:1px;height:14px;background:#3e3e3e"></div>
<div class="t" style="top:230.69px;font-size:11px;line-height:1;left:963.2px;color:#e6e6e6;transform:scaleX(0.9796);transform-origin:0 0">0</div>
<svg style="left:1022px;top:233px" width="9" height="5" viewBox="0 0 9 5"><path d="M0.5 0.5L4.5 4.2L8.5 0.5" stroke="#cfcfcf" stroke-width="1.1" fill="none"/></svg>
<svg style="left:828px;top:248px" width="19" height="14" viewBox="0 0 19 14"><path d="M3 0.5V13.5M1 2.5L3 0.5L5 2.5M1 11.5L3 13.5L5 11.5" stroke="#d8d8d8" stroke-width="1.1" fill="none"/><path d="M7.5 0.5H18.5V3.3H17.5C17.3 2 16.8 1.8 15.5 1.8H14V12.2L15.8 12.6V13.5H10.2V12.6L12 12.2V1.8H10.5C9.2 1.8 8.7 2 8.5 3.3H7.5Z" fill="#d8d8d8"/></svg>
<div class="a dd" style="left:849px;top:246px;width:54px;height:17px;border-radius:3px"></div>
<div class="t" style="top:250.69px;font-size:11px;line-height:1;left:854.2px;color:#e6e6e6;transform:scaleX(0.8173);transform-origin:0 0">100%</div>
<svg style="left:959px;top:247px" width="19" height="17" viewBox="0 0 19 17"><path d="M3.5 0.5H15.5V3.3H14.5C14.3 2 13.8 1.8 12.5 1.8H11V10.2L12.8 10.6V11.5H6.2V10.6L8 10.2V1.8H6.5C5.2 1.8 4.7 2 4.5 3.3H3.5Z" fill="#d8d8d8"/><path d="M1 14.5H18M1 14.5L3 12.8M1 14.5L3 16.2M18 14.5L16 12.8M18 14.5L16 16.2" stroke="#d8d8d8" stroke-width="1.1" fill="none"/></svg>
<div class="a dd" style="left:979px;top:246px;width:55px;height:17px;border-radius:3px"></div>
<div class="t" style="top:250.69px;font-size:11px;line-height:1;left:985px;color:#e6e6e6;transform:scaleX(0.8173);transform-origin:0 0">100%</div>
<svg style="left:828px;top:268px" width="17" height="16" viewBox="0 0 17 16"><path d="M0.5 9L3.5 0.5L6.5 9M1.5 6.5H5.5M0 10.8H7.5" stroke="#d8d8d8" stroke-width="1" fill="none"/><text x="7.5" y="6" font-size="7" fill="#d8d8d8" font-family="Liberation Sans">a</text><path d="M12.5 15.5V9M10.5 11L12.5 9L14.5 11" stroke="#d8d8d8" stroke-width="1.1" fill="none"/></svg>
<div class="a dd" style="left:850px;top:267px;width:54px;height:17px;border-radius:3px"></div>
<div class="t" style="top:271.69px;font-size:11px;line-height:1;left:854.7px;color:#e6e6e6;transform:scaleX(0.9532);transform-origin:0 0">0 pt</div>
<div class="t" style="top:271.69px;font-size:11px;line-height:1;left:945.6px;color:#c4d0dc;transform:scaleX(0.8690);transform-origin:0 0">Color:</div>
<div class="a" style="left:979px;top:266px;width:56px;height:20px;background:#fff;border:1px solid #3a3a3a"></div>
<div class="a" style="left:837px;top:289px;width:22px;height:22px;background:#3b3b3b;border-radius:3px"></div><div class="a" style="left:837px;top:317px;width:22px;height:22px;background:#3b3b3b;border-radius:3px"></div><div class="t" style="top:294.30px;font-size:15px;line-height:1;left:842px;color:#e0e0e0;font-family:'Liberation Serif',serif;font-weight:bold;">T</div><div class="t" style="top:294.30px;font-size:15px;line-height:1;left:866px;color:#e0e0e0;font-family:'Liberation Serif',serif;font-weight:bold;font-style:italic;font-weight:normal">T</div><div class="t" style="top:294.30px;font-size:15px;line-height:1;left:886px;color:#e0e0e0;font-family:'Liberation Serif',serif;font-weight:bold;font-weight:bold">TT</div><div class="t" style="top:294.30px;font-size:15px;line-height:1;left:912px;color:#e0e0e0;font-family:'Liberation Serif',serif;font-weight:bold;">T<span style="font-size:10px">T</span></div><div class="t" style="top:294.30px;font-size:15px;line-height:1;left:936px;color:#e0e0e0;font-family:'Liberation Serif',serif;font-weight:bold;">T<span style="font-size:8px;vertical-align:6px">1</span></div><div class="t" style="top:294.30px;font-size:15px;line-height:1;left:960px;color:#e0e0e0;font-family:'Liberation Serif',serif;font-weight:bold;">T<span style="font-size:8px;vertical-align:-2px">1</span></div><div class="t" style="top:293.30px;font-size:15px;line-height:1;left:986px;color:#e0e0e0;font-family:'Liberation Serif',serif;font-weight:bold;">T</div><div class="a" style="left:986px;top:307px;width:12px;height:1.3px;background:#e0e0e0"></div><div class="t" style="top:294.30px;font-size:15px;line-height:1;left:1010px;color:#e0e0e0;font-family:'Liberation Serif',serif;font-weight:bold;">T</div><div class="a" style="left:1009px;top:300px;width:13px;height:1.3px;background:#e0e0e0"></div><div class="t" style="top:320.61px;font-size:17px;line-height:1;left:841px;color:#e0e0e0;font-family:'Liberation Serif',serif;font-weight:bold;font-weight:normal">ﬁ</div><div class="t" style="top:321.30px;font-size:15px;line-height:1;left:866px;color:#8c8c8c;font-family:'Liberation Serif',serif;font-weight:bold;font-style:italic;font-weight:normal">σ</div><div class="t" style="top:322.30px;font-size:15px;line-height:1;left:889px;color:#8c8c8c;font-family:'Liberation Serif',serif;font-weight:bold;font-weight:normal">st</div><div class="t" style="top:321.46px;font-size:16px;line-height:1;left:913px;color:#8c8c8c;font-family:'Liberation Serif',serif;font-weight:bold;font-style:italic;font-weight:normal">A</div><div class="t" style="top:324.00px;font-size:13px;line-height:1;left:935px;color:#8c8c8c;font-family:'Liberation Serif',serif;font-weight:bold;font-weight:normal">aa</div><svg style="left:935px;top:320px" width="15" height="5"><path d="M0 2.5H13M10.5 0.5L13 2.5L10.5 4.5" stroke="#8c8c8c" stroke-width="1" fill="none"/></svg><div class="t" style="top:322.30px;font-size:15px;line-height:1;left:960px;color:#8c8c8c;font-family:'Liberation Serif',serif;font-weight:bold;font-style:italic;font-weight:normal">T</div><div class="t" style="top:320.61px;font-size:17px;line-height:1;left:984px;color:#e0e0e0;font-family:'Liberation Serif',serif;font-weight:bold;font-weight:normal">1<span style="font-size:9px;vertical-align:7px">st</span></div><div class="t" style="top:321.46px;font-size:16px;line-height:1;left:1009px;color:#e0e0e0;font-family:'Liberation Serif',serif;font-weight:bold;font-weight:normal">½</div>
<div class="a dd" style="left:829px;top:345px;width:114px;height:19px;border-radius:3px"></div>
<div class="t" style="top:349.49px;font-size:11px;line-height:1;left:836.6px;color:#e6e6e6;transform:scaleX(0.9053);transform-origin:0 0">Español</div>
<svg style="left:931px;top:352px" width="9" height="5" viewBox="0 0 9 5"><path d="M0.5 0.5L4.5 4.2L8.5 0.5" stroke="#cfcfcf" stroke-width="1.1" fill="none"/></svg>
<div class="t" style="top:348.38px;font-size:9px;line-height:1;left:948px;color:#d8d8d8">a</div><div class="t" style="top:349.69px;font-size:11px;line-height:1;left:953.5px;color:#d8d8d8">a</div>
<div class="a dd" style="left:968px;top:345px;width:66px;height:19px;border-radius:3px"></div>
<div class="t" style="top:349.49px;font-size:11px;line-height:1;left:975.5px;color:#e6e6e6;transform:scaleX(0.8820);transform-origin:0 0">Enfocado</div>
<svg style="left:1022px;top:352px" width="9" height="5" viewBox="0 0 9 5"><path d="M0.5 0.5L4.5 4.2L8.5 0.5" stroke="#cfcfcf" stroke-width="1.1" fill="none"/></svg>

<!-- STATUS BAR -->
<div class="a" style="left:42px;top:711px;width:996px;height:17px;background:#535353"></div>
<div class="a" style="left:42px;top:711px;width:47px;height:17px;background:#4b4b4b"></div>
<div class="t" style="top:715.19px;font-size:11px;line-height:1;left:48.5px;color:#e6e6e6;transform:scaleX(0.8844);transform-origin:0 0">33,33%</div>
<div class="t" style="top:715.19px;font-size:11px;line-height:1;left:137px;color:#d6d6d6;transform:scaleX(0.8961);transform-origin:0 0">1638 px x 1764 px (300 ppp)</div>
<svg style="left:313px;top:714px" width="5" height="9" viewBox="0 0 5 9"><path d="M0.5 0.5L4.5 4.5L0.5 8.5" stroke="#c8c8c8" stroke-width="1" fill="none"/></svg>
<div class="a" style="left:323px;top:711px;width:2px;height:17px;background:#3f3f3f"></div>
<div class="a" style="left:325px;top:711px;width:697px;height:17px;background:#4a4a4a"></div>
<svg style="left:331px;top:714px" width="5" height="9" viewBox="0 0 5 9"><path d="M4.5 0.5L0.5 4.5L4.5 8.5" stroke="#8a8a8a" stroke-width="1" fill="none"/></svg>
<div class="a" style="left:531px;top:713px;width:283px;height:12px;background:#6a6a6a"></div>
<svg style="left:1010px;top:714px" width="5" height="9" viewBox="0 0 5 9"><path d="M0.5 0.5L4.5 4.5L0.5 8.5" stroke="#8a8a8a" stroke-width="1" fill="none"/></svg>
<div class="a" style="left:1022px;top:711px;width:16px;height:17px;background:#535353"></div>

<!-- ICON STRIP -->
<div class="a" style="left:1041px;top:59px;width:37px;height:669px;background:#535353"></div>
<div class="a" style="left:1078px;top:59px;width:3px;height:669px;background:#383838"></div><div class="a" style="left:1079px;top:59px;width:1px;height:669px;background:#424242"></div>

<!-- RIGHT PANELS -->
<div class="a" style="left:1081px;top:59px;width:285px;height:669px;background:#535353"></div>


<!-- right header -->
<div class="a" style="left:1041px;top:59px;width:325px;height:11px;background:#434343"></div>
<svg style="left:1065px;top:62px" width="8" height="6" viewBox="0 0 8 6"><path d="M3.2 0.6L1 2.8L3.2 5M7.2 0.6L5 2.8L7.2 5" stroke="#e8e8e8" stroke-width="1.4" fill="none"/></svg>
<svg style="left:1352px;top:62px" width="8" height="6" viewBox="0 0 8 6"><path d="M0.8 0.6L3 2.8L0.8 5M4.8 0.6L7 2.8L4.8 5" stroke="#e8e8e8" stroke-width="1.4" fill="none"/></svg>
<!-- icon strip -->
<div class="a" style="left:1050px;top:74px;width:20px;height:4px;background:repeating-linear-gradient(90deg,#434343 0 1px,transparent 1px 2px)"></div>
<svg style="left:1052px;top:85px" width="16" height="17" viewBox="0 0 16 17"><rect x="1.5" y="0.5" width="4.6" height="4.6" stroke="#dcdcdc" stroke-width="1.2" fill="none"/><rect x="1.5" y="6.3" width="4.6" height="4.6" stroke="#dcdcdc" stroke-width="1.2" fill="none"/><rect x="1" y="12" width="5.2" height="5" fill="#dcdcdc"/><path d="M9.2 1.2 L14.8 0.3 L13.8 5.5Z" fill="#dcdcdc"/><path d="M13.2 2.5 C15.3 5.5 15.2 10.5 10.3 14.8" stroke="#dcdcdc" stroke-width="1.7" fill="none"/></svg>
<svg style="left:1053px;top:115px" width="14" height="13" viewBox="0 0 14 13"><path d="M0.5 0.5H13.5V8.5H6L3 12.5V8.5H0.5Z" fill="#e0e0e0"/></svg>
<div class="a" style="left:1041px;top:138px;width:37px;height:2px;background:#3c3c3c"></div>
<div class="a" style="left:1050px;top:143px;width:20px;height:4px;background:repeating-linear-gradient(90deg,#434343 0 1px,transparent 1px 2px)"></div>
<div class="a" style="left:1046px;top:151px;width:28px;height:24px;background:#393939;border-radius:3px;border:1px solid #4c4c4c"></div>
<div class="t" style="top:156.03px;font-size:14.5px;line-height:1;left:1053px;color:#e8e8e8;transform:scaleX(1.1166);transform-origin:0 0">A</div>
<div class="a" style="left:1065.5px;top:155px;width:1px;height:15px;background:#e8e8e8"></div>
<svg style="left:1054px;top:183px" width="11" height="15" viewBox="0 0 11 15"><path d="M5 0.5H10.5V15H8.5V2H7.5V15H5.5V8.5C2.5 8.5 0.5 7 0.5 4.5C0.5 2 2.5 0.5 5 0.5Z" fill="#e0e0e0"/></svg>
<div class="a" style="left:1081px;top:68px;width:285px;height:31px;background:#434343"></div><div class="a" style="left:1081px;top:71px;width:42px;height:28px;background:#535353"></div><div class="t" style="top:79.09px;font-size:11px;line-height:1;left:1089.7px;color:#f2f2f2;font-weight:bold;transform:scaleX(0.9048);transform-origin:0 0">Color</div><div class="a" style="left:1183px;top:71px;width:1px;height:28px;background:#3c3c3c"></div><div class="t" style="top:79.09px;font-size:11px;line-height:1;left:1132px;color:#a6a6a6;font-weight:bold;transform:scaleX(0.8903);transform-origin:0 0">Muestras</div><div class="a" style="left:1258.5px;top:71px;width:1px;height:28px;background:#3c3c3c"></div><div class="t" style="top:79.09px;font-size:11px;line-height:1;left:1192.7px;color:#a6a6a6;font-weight:bold;transform:scaleX(0.8965);transform-origin:0 0">Degradados</div><div class="a" style="left:1314px;top:71px;width:1px;height:28px;background:#3c3c3c"></div><div class="t" style="top:79.09px;font-size:11px;line-height:1;left:1267.7px;color:#a6a6a6;font-weight:bold;transform:scaleX(0.9263);transform-origin:0 0">Motivos</div><div class="a" style="left:1350px;top:80px;width:10px;height:8px;background:repeating-linear-gradient(#cfcfcf 0 1px,transparent 1px 2.3px)"></div>
<div class="a" style="left:1100px;top:119px;width:20px;height:20px;background:#fff;border:1px solid #3a3a3a"></div>
<div class="a" style="left:1090px;top:109px;width:20px;height:20px;background:#e6e6e6;border:1px solid #222;box-shadow:0 0 0 1px #9a9a9a"></div>
<div class="a" style="left:1126px;top:106px;width:187px;height:76px;background:linear-gradient(to top,#000,rgba(0,0,0,0)),linear-gradient(90deg,#fff,#f00)"></div>
<svg style="left:1122px;top:108px" width="11" height="13" viewBox="0 0 11 13"><path d="M4 1.2 A5.2 5.2 0 0 1 4 11.6" stroke="#111" stroke-width="1.8" fill="none"/></svg>
<div class="a" style="left:1330px;top:106px;width:19px;height:76px;background:linear-gradient(#ff0000 0%,#ff0000 4%,#ff00ff 18%,#6000ff 27%,#0000ff 33%,#00ffff 50%,#00ff40 60%,#00ff00 68%,#00ff00 75%,#ffff00 84%,#ff8000 92%,#ff0000 100%)"></div>
<svg style="left:1320px;top:177px" width="8" height="9" viewBox="0 0 8 9"><path d="M1 0.7 C4 1.5 7 3.5 7.3 4.5 C7 5.5 4 7.5 1 8.3 C0.5 6 0.5 3 1 0.7Z" fill="#e8e8e8" stroke="#777" stroke-width="0.5"/></svg>
<div class="a" style="left:1081px;top:203px;width:285px;height:3px;background:#3c3c3c"></div>
<div class="a" style="left:1081px;top:203px;width:285px;height:30px;background:#434343"></div><div class="a" style="left:1081px;top:206px;width:75px;height:27px;background:#535353"></div><div class="t" style="top:213.69px;font-size:11px;line-height:1;left:1090px;color:#f2f2f2;font-weight:bold;transform:scaleX(0.8784);transform-origin:0 0">Propiedades</div><div class="a" style="left:1207px;top:206px;width:1px;height:27px;background:#3c3c3c"></div><div class="t" style="top:213.69px;font-size:11px;line-height:1;left:1165px;color:#a6a6a6;font-weight:bold;transform:scaleX(0.8478);transform-origin:0 0">Ajustes</div><div class="a" style="left:1276px;top:206px;width:1px;height:27px;background:#3c3c3c"></div><div class="t" style="top:213.69px;font-size:11px;line-height:1;left:1217px;color:#a6a6a6;font-weight:bold;transform:scaleX(0.8690);transform-origin:0 0">Bibliotecas</div><div class="a" style="left:1350px;top:215px;width:10px;height:8px;background:repeating-linear-gradient(#cfcfcf 0 1px,transparent 1px 2.3px)"></div>
<div class="t" style="top:247.69px;font-size:11px;line-height:1;left:1090px;color:#dcdcdc;transform:scaleX(0.8992);transform-origin:0 0">Sin propiedades</div>
<div class="a" style="left:1081px;top:267px;width:285px;height:1px;background:#404040"></div>
<div class="a" style="left:1349px;top:269px;width:16px;height:156px;background:#4b4b4b"></div>
<div class="a" style="left:1081px;top:451px;width:285px;height:3px;background:#383838"></div><div class="a" style="left:1081px;top:452px;width:285px;height:1px;background:#474747"></div>
<div class="a" style="left:1081px;top:451px;width:285px;height:30px;background:#434343"></div><div class="a" style="left:1081px;top:454px;width:45px;height:27px;background:#535353"></div><div class="t" style="top:461.69px;font-size:11px;line-height:1;left:1090px;color:#f2f2f2;font-weight:bold;transform:scaleX(0.8386);transform-origin:0 0">Capas</div><div class="a" style="left:1179px;top:454px;width:1px;height:27px;background:#3c3c3c"></div><div class="t" style="top:461.69px;font-size:11px;line-height:1;left:1135px;color:#a6a6a6;font-weight:bold;transform:scaleX(0.8483);transform-origin:0 0">Canales</div><div class="a" style="left:1238.5px;top:454px;width:1px;height:27px;background:#3c3c3c"></div><div class="t" style="top:461.69px;font-size:11px;line-height:1;left:1189.2px;color:#a6a6a6;font-weight:bold;transform:scaleX(0.8598);transform-origin:0 0">Trazados</div><div class="a" style="left:1350px;top:465px;width:10px;height:8px;background:repeating-linear-gradient(#cfcfcf 0 1px,transparent 1px 2.3px)"></div><div class="a dd" style="left:1085px;top:491px;width:108px;height:20px;border-radius:3px"></div>
<svg style="left:1092px;top:495px" width="12" height="12" viewBox="0 0 12 12"><circle cx="4.8" cy="4.8" r="3.8" stroke="#e6e6e6" stroke-width="1.4" fill="none"/><path d="M7.5 7.5L11 11" stroke="#e6e6e6" stroke-width="1.8"/></svg>
<div class="t" style="top:495.89px;font-size:11px;line-height:1;left:1107.3px;color:#e6e6e6;transform:scaleX(0.9048);transform-origin:0 0">Tipo</div>
<svg style="left:1181px;top:499px" width="9" height="5" viewBox="0 0 9 5"><path d="M0.5 0.5L4.5 4.2L8.5 0.5" stroke="#cfcfcf" stroke-width="1.1" fill="none"/></svg>
<svg style="left:1214px;top:495px" width="14" height="12" viewBox="0 0 14 12"><rect x="0.6" y="0.6" width="12.5" height="10.5" stroke="#e0e0e0" stroke-width="1.2" fill="none"/><path d="M2.5 9.5L5.5 5L7.5 7.5L9 6L11.5 9.5Z" fill="#e0e0e0"/></svg>
<svg style="left:1240px;top:495px" width="12" height="12" viewBox="0 0 12 12"><circle cx="6" cy="6" r="5.3" stroke="#e0e0e0" stroke-width="1.2" fill="none"/><path d="M9.8 2.2 A5.3 5.3 0 0 1 2.2 9.8Z" fill="#e0e0e0"/></svg>
<svg style="left:1265px;top:495px" width="11" height="12" viewBox="0 0 11 12"><path d="M0.5 0.5H10.5V3.3H9.5C9.3 2 8.8 1.8 7.5 1.8H6.5V10.3L8 10.6V11.5H3V10.6L4.5 10.3V1.8H3.5C2.2 1.8 1.7 2 1.5 3.3H0.5Z" fill="#e0e0e0"/></svg>
<svg style="left:1288px;top:495px" width="12" height="12" viewBox="0 0 12 12"><rect x="1.5" y="1.5" width="9" height="9" stroke="#e0e0e0" stroke-width="1.1" fill="none"/><rect x="0" y="0" width="3" height="3" fill="#e0e0e0"/><rect x="9" y="0" width="3" height="3" fill="#e0e0e0"/><rect x="0" y="9" width="3" height="3" fill="#e0e0e0"/><rect x="9" y="9" width="3" height="3" fill="#e0e0e0"/></svg>
<svg style="left:1313px;top:495px" width="11" height="12" viewBox="0 0 11 12"><path d="M3 0.6H7.5L10.4 3.5V10H5" stroke="#e0e0e0" stroke-width="1.1" fill="none"/><path d="M7.5 0.6V3.5H10.4" stroke="#e0e0e0" stroke-width="1" fill="none"/><rect x="0" y="6" width="6" height="6" fill="#e0e0e0"/></svg>
<div class="a" style="left:1346px;top:491px;width:10px;height:18px;border-radius:5px;background:#3a3a3a;border:1px solid #4a4a4a"></div>
<div class="a" style="left:1346px;top:491px;width:10px;height:10px;border-radius:5px;background:#e0e0e0"></div>
<div class="a" style="left:1081px;top:513px;width:285px;height:1px;background:#444"></div>
<div class="a dd" style="left:1085px;top:519px;width:163px;height:20px;border-radius:3px"></div>
<div class="t" style="top:523.69px;font-size:11px;line-height:1;left:1093.2px;color:#e6e6e6;transform:scaleX(0.9078);transform-origin:0 0">Pass Through</div>
<svg style="left:1237px;top:527px" width="9" height="5" viewBox="0 0 9 5"><path d="M0.5 0.5L4.5 4.2L8.5 0.5" stroke="#cfcfcf" stroke-width="1.1" fill="none"/></svg>
<div class="t" style="top:523.69px;font-size:11px;line-height:1;left:1254.2px;color:#d6d6d6;transform:scaleX(0.8872);transform-origin:0 0">Opacidad:</div>
<div class="a dd" style="left:1304px;top:520px;width:51px;height:16px;border-radius:3px"></div><div class="a" style="left:1339px;top:521px;width:1px;height:14px;background:#3e3e3e"></div>
<div class="t" style="top:523.69px;font-size:11px;line-height:1;left:1309.4px;color:#e6e6e6;transform:scaleX(0.8706);transform-origin:0 0">100%</div>
<svg style="left:1342px;top:526px" width="9" height="5" viewBox="0 0 9 5"><path d="M0.5 0.5L4.5 4.2L8.5 0.5" stroke="#cfcfcf" stroke-width="1.1" fill="none"/></svg>
<div class="a" style="left:1081px;top:541px;width:285px;height:1px;background:#444"></div>
<div class="t" style="top:551.69px;font-size:11px;line-height:1;left:1087px;color:#d6d6d6;transform:scaleX(0.9062);transform-origin:0 0">Bloq.:</div>
<svg style="left:1122px;top:550px" width="11" height="11" viewBox="0 0 11 11"><rect x="0.5" y="0.5" width="10" height="10" fill="#8a8a8a" stroke="#9a9a9a" stroke-width="1"/><rect x="1" y="1" width="3" height="3" fill="#555"/><rect x="7" y="1" width="3" height="3" fill="#555"/><rect x="4" y="4" width="3" height="3" fill="#555"/><rect x="1" y="7" width="3" height="3" fill="#555"/><rect x="7" y="7" width="3" height="3" fill="#555"/></svg>
<svg style="left:1143px;top:549px" width="13" height="14" viewBox="0 0 13 14"><path d="M12.5 0.5L5.5 8" stroke="#9a9a9a" stroke-width="2.2" stroke-linecap="round"/><path d="M4.5 7.5C2 7.5 1.5 10 1 12.5L0.5 14C3.5 14 6.5 12.5 6.5 10Z" fill="#9a9a9a"/></svg>
<svg style="left:1165px;top:549px" width="13" height="13" viewBox="0 0 13 13"><path d="M6.5 1V12M1 6.5H12" stroke="#9a9a9a" stroke-width="1.1"/><path d="M6.5 0L8.5 2.5H4.5Z M6.5 13L8.5 10.5H4.5Z M0 6.5L2.5 4.5V8.5Z M13 6.5L10.5 4.5V8.5Z" fill="#9a9a9a"/></svg>
<svg style="left:1187px;top:549px" width="14" height="14" viewBox="0 0 14 14"><path d="M3 0V11H14M0 3H11V14" stroke="#e0e0e0" stroke-width="1" fill="none" stroke-dasharray="2 1"/><path d="M3 3H11V11" stroke="#e0e0e0" stroke-width="1.2" fill="none"/><path d="M6 3 L11 8" stroke="#e0e0e0" stroke-width="1.2"/></svg>
<svg style="left:1211px;top:549px" width="10" height="13" viewBox="0 0 10 13"><path d="M2.5 6V4A2.5 2.5 0 0 1 7.5 4V6" stroke="#e0e0e0" stroke-width="1.6" fill="none"/><rect x="0" y="6" width="10" height="7" fill="#e0e0e0"/><rect x="4.3" y="8.5" width="1.4" height="2.5" fill="#535353"/></svg>
<div class="t" style="top:551.69px;font-size:11px;line-height:1;left:1265px;color:#d6d6d6;transform:scaleX(0.8424);transform-origin:0 0">Relleno:</div>
<div class="a dd" style="left:1304px;top:548px;width:51px;height:16px;border-radius:3px"></div><div class="a" style="left:1339px;top:549px;width:1px;height:14px;background:#3e3e3e"></div>
<div class="t" style="top:551.69px;font-size:11px;line-height:1;left:1309.4px;color:#e6e6e6;transform:scaleX(0.8706);transform-origin:0 0">100%</div>
<svg style="left:1342px;top:554px" width="9" height="5" viewBox="0 0 9 5"><path d="M0.5 0.5L4.5 4.2L8.5 0.5" stroke="#cfcfcf" stroke-width="1.1" fill="none"/></svg>
<!-- layers list -->
<div class="a" style="left:1081px;top:569px;width:285px;height:133px;background:#535353"></div>
<div class="a" style="left:1349px;top:569px;width:17px;height:133px;background:#4b4b4b"></div>
<svg style="left:1354px;top:579px" width="8" height="5" viewBox="0 0 8 5"><path d="M0.5 4.5L4 1L7.5 4.5" stroke="#8a8a8a" stroke-width="1" fill="none"/></svg>
<div class="a" style="left:1351px;top:670px;width:12px;height:14px;background:#6a6a6a"></div>
<svg style="left:1354px;top:690px" width="8" height="5" viewBox="0 0 8 5"><path d="M0.5 0.5L4 4L7.5 0.5" stroke="#8a8a8a" stroke-width="1" fill="none"/></svg>
<div class="a" style="left:1110px;top:569px;width:1px;height:133px;background:#484848"></div>
<div class="a" style="left:1090px;top:575px;width:12px;height:12px;border:1px solid #4a4a4a"></div>
<div class="a" style="left:1115px;top:572px;width:29px;height:25px;background:#fcfcfc;border:1px solid #2e2e2e"></div>
<div class="a" style="left:1118px;top:580px;width:20px;height:7px;background:radial-gradient(ellipse,rgba(190,200,210,0.8),rgba(255,255,255,0) 70%)"></div>
<div class="a" style="left:1117px;top:593px;width:25px;height:2px;background:linear-gradient(90deg,#6a9,#3a3 40%,#fff 50%,#3a3)"></div>
<svg style="left:1148px;top:574px" width="8" height="14" viewBox="0 0 8 14"><rect x="1" y="0.8" width="6" height="6" rx="3" stroke="#e0e0e0" stroke-width="1.5" fill="none"/><rect x="1" y="7.2" width="6" height="6" rx="3" stroke="#e0e0e0" stroke-width="1.5" fill="none"/><path d="M4 3.5V10.5" stroke="#e0e0e0" stroke-width="1.3"/></svg>
<div class="a" style="left:1160px;top:572px;width:29px;height:25px;background:linear-gradient(#fff 0%,#f0f0f0 20%,#777 45%,#000 55%,#000);border:1px solid #2e2e2e"></div>
<div class="t" style="top:576.69px;font-size:11px;line-height:1;left:1199px;color:#ececec;transform:scaleX(0.8719);transform-origin:0 0">PARA EDITAR</div>
<div class="a" style="left:1081px;top:600px;width:268px;height:1px;background:#484848"></div>
<div class="a" style="left:1090px;top:617px;width:12px;height:12px;border:1px solid #4a4a4a"></div>
<div class="a" style="left:1115px;top:607px;width:30px;height:32px;background:#e2b08c;border:1px solid #2e2e2e"></div>
<div class="a" style="left:1130px;top:624px;width:15px;height:15px;background:#3a3a3a"></div>
<svg style="left:1131px;top:625px" width="13" height="13" viewBox="0 0 13 13"><rect x="2" y="2" width="9" height="9" stroke="#e0e0e0" stroke-width="1" fill="none"/><rect x="0.5" y="0.5" width="3" height="3" fill="#e0e0e0"/><rect x="9.5" y="0.5" width="3" height="3" fill="#e0e0e0"/><rect x="0.5" y="9.5" width="3" height="3" fill="#e0e0e0"/><rect x="9.5" y="9.5" width="3" height="3" fill="#e0e0e0"/></svg>
<div class="t" style="top:618.69px;font-size:11px;line-height:1;left:1154px;color:#ececec;transform:scaleX(0.8792);transform-origin:0 0">Rectángulo 2</div>
<div class="a" style="left:1081px;top:645px;width:268px;height:1px;background:#484848"></div>
<svg style="left:1089px;top:661px" width="15" height="9" viewBox="0 0 15 9"><path d="M0.5 4.5C3 1 5 0.5 7.5 0.5C10 0.5 12 1 14.5 4.5C12 8 10 8.5 7.5 8.5C5 8.5 3 8 0.5 4.5Z" fill="#e6e6e6"/><circle cx="7.5" cy="4.5" r="2.3" fill="#535353"/><circle cx="7.5" cy="4.5" r="1.2" fill="#e6e6e6"/></svg>
<div class="a" style="left:1115px;top:655px;width:30px;height:27px;background:#fff;border:1px solid #2e2e2e;border-top:none"></div>
<div class="t" style="top:660.69px;font-size:11px;line-height:1;left:1154px;color:#ececec;transform:scaleX(0.8454);transform-origin:0 0">Capa 0</div>
<svg style="left:1305px;top:658px" width="13" height="13" viewBox="0 0 13 13"><rect x="0.5" y="0.5" width="8" height="8" stroke="#d0d0d0" stroke-width="1" fill="none"/><rect x="4" y="4" width="8.5" height="8.5" fill="#d0d0d0" stroke="#535353" stroke-width="1"/></svg>
<div class="t" style="top:660.42px;font-size:12.5px;line-height:1;left:1323px;color:#d8d8d8;font-style:italic;font-family:'Liberation Serif',serif">fx</div>
<svg style="left:1341px;top:663px" width="8" height="5" viewBox="0 0 8 5"><path d="M0.5 4.5L4 1L7.5 4.5" stroke="#d0d0d0" stroke-width="1" fill="none"/></svg>
<svg style="left:1131px;top:691px" width="14" height="9" viewBox="0 0 15 9"><path d="M0.5 4.5C3 1 5 0.5 7.5 0.5C10 0.5 12 1 14.5 4.5C12 8 10 8.5 7.5 8.5C5 8.5 3 8 0.5 4.5Z" fill="#e6e6e6"/><circle cx="7.5" cy="4.5" r="2.3" fill="#535353"/><circle cx="7.5" cy="4.5" r="1.2" fill="#e6e6e6"/></svg>
<div class="t" style="top:687.69px;font-size:11px;line-height:1;left:1149px;color:#ececec;transform:scaleX(0.8586);transform-origin:0 0">Efectos</div>
<div class="a" style="left:1081px;top:702px;width:285px;height:26px;background:#535353;border-top:1px solid #444"></div>
<svg style="left:1163px;top:711px" width="15" height="8" viewBox="0 0 15 8"><path d="M5 0.7H3.5A3.3 3.3 0 0 0 3.5 7.3H5M10 0.7H11.5A3.3 3.3 0 0 1 11.5 7.3H10M4.5 4H10.5" stroke="#9a9a9a" stroke-width="1.3" fill="none"/></svg>
<div class="t" style="top:710.00px;font-size:13px;line-height:1;left:1191px;color:#d8d8d8;font-style:italic;font-family:'Liberation Serif',serif">fx</div>
<svg style="left:1200px;top:721px" width="4" height="3"><path d="M0 0H4L2 2.5Z" fill="#e6e6e6"/></svg>
<svg style="left:1217px;top:709px" width="14" height="11" viewBox="0 0 14 11"><rect x="0" y="0" width="14" height="11" rx="1" fill="#e0e0e0"/><circle cx="7" cy="5.5" r="3.3" fill="#535353"/></svg>
<svg style="left:1245px;top:709px" width="12" height="12" viewBox="0 0 12 12"><circle cx="6" cy="6" r="5.3" stroke="#e0e0e0" stroke-width="1.2" fill="none"/><path d="M9.8 2.2 A5.3 5.3 0 0 1 2.2 9.8Z" fill="#e0e0e0"/></svg>
<svg style="left:1256px;top:721px" width="4" height="3"><path d="M0 0H4L2 2.5Z" fill="#e6e6e6"/></svg>
<svg style="left:1271px;top:709px" width="14" height="11" viewBox="0 0 14 11"><path d="M0 1H5L6.5 2.5H14V11H0Z" fill="#e0e0e0"/></svg>
<svg style="left:1299px;top:708px" width="13" height="13" viewBox="0 0 13 13"><rect x="0.6" y="0.6" width="11.8" height="11.8" stroke="#e0e0e0" stroke-width="1.2" fill="none"/><path d="M6.5 3V10M3 6.5H10" stroke="#e0e0e0" stroke-width="1.3"/></svg>
<svg style="left:1326px;top:708px" width="12" height="14" viewBox="0 0 12 14"><path d="M0 2.5H12M4 2.5V0.8H8V2.5" stroke="#e0e0e0" stroke-width="1.2" fill="none"/><path d="M1.5 3.5H10.5V13.4H1.5Z" stroke="#e0e0e0" stroke-width="1.2" fill="none"/><path d="M4.2 5V11.5M6 5V11.5M7.8 5V11.5" stroke="#e0e0e0" stroke-width="1"/></svg>
<!-- tooltip -->
<div class="a" style="left:990px;top:641px;width:374px;height:15px;background:#ffffe1;border:1px solid #000"></div>
<div class="t" style="top:643.99px;font-size:11px;line-height:1;left:994.7px;color:#000;transform:scaleX(0.9072);transform-origin:0 0">Alterna la visibilidad de la capa. Haga clic y pulse Alt para mostrar solo la capa.</div>

<!-- TASKBAR -->
<div class="a" style="left:0;top:728px;width:1366px;height:40px;background:#3d3329"></div>
<svg style="left:15px;top:739px" width="18" height="18" viewBox="0 0 18 18"><path d="M0 2.5L7.3 1.5V8.3H0Z M8.3 1.3L17.5 0V8.3H8.3Z M0 9.3H7.3V16.2L0 15.2Z M8.3 9.3H17.5V17.5L8.3 16.3Z" fill="#fff"/></svg>
<div class="a" style="left:48px;top:728px;width:288px;height:40px;background:#f0f0f0;border-bottom:1px solid #c8c8c8"></div>
<svg style="left:59px;top:740px" width="18" height="17" viewBox="0 0 18 17"><circle cx="11.2" cy="6" r="5.2" stroke="#1a1a1a" stroke-width="1.3" fill="none"/><path d="M7.5 9.8L1 16.3" stroke="#1a1a1a" stroke-width="1.4"/></svg>
<div class="t" style="top:741.66px;font-size:16px;line-height:1;left:88.4px;color:#1c1c1c;transform:scaleX(0.8535);transform-origin:0 0">Buscar</div>
<!-- lavender & bee -->
<svg style="left:262px;top:730px" width="72" height="38" viewBox="0 0 72 39">
 <path d="M10 38 C14 30 18 22 22 14 M14 38 C18 32 20 26 20 20 M40 38 C46 34 52 28 58 18 M52 38 C56 30 60 24 62 16" stroke="#5f9a60" stroke-width="1.2" fill="none"/>
 <g fill="#9d8ad0"><ellipse cx="5" cy="10" rx="2.5" ry="3.5"/><ellipse cx="9" cy="14" rx="2.5" ry="3.5"/><ellipse cx="12" cy="18" rx="2.5" ry="3"/><ellipse cx="18" cy="6" rx="2.5" ry="3.5"/><ellipse cx="20" cy="11" rx="2.5" ry="3.5"/><ellipse cx="22" cy="2" rx="2.5" ry="3.5"/><ellipse cx="16" cy="15" rx="2.5" ry="3"/>
 <ellipse cx="56" cy="6" rx="2.5" ry="3.5"/><ellipse cx="58" cy="12" rx="2.5" ry="3.5"/><ellipse cx="62" cy="3" rx="2.5" ry="3.5"/><ellipse cx="64" cy="9" rx="2.5" ry="3.5"/><ellipse cx="63" cy="16" rx="2.5" ry="3"/><ellipse cx="66" cy="22" rx="2.5" ry="3"/><ellipse cx="60" cy="22" rx="2.5" ry="3"/></g>
 <ellipse cx="40" cy="13" rx="9" ry="7" fill="#d8d0f0" opacity="0.8"/>
 <ellipse cx="35" cy="16" rx="6.5" ry="7" fill="#e0a83a"/>
 <path d="M30 12 L40 20 M31 17 L38 22" stroke="#5a4028" stroke-width="2"/>
 <circle cx="30" cy="10" r="3" fill="#5a4a40"/>
</svg>
<!-- task view -->
<svg style="left:352px;top:740px" width="17" height="16" viewBox="0 0 17 16"><rect x="0.6" y="3" width="11.5" height="10" stroke="#f0f0f0" stroke-width="1.2" fill="none"/><path d="M0 0.6H12.5M0 15.4H12.5M15.5 0V3M15.5 5V11M15.5 13V16" stroke="#f0f0f0" stroke-width="1.2"/></svg>
<!-- copilot -->
<svg style="left:400px;top:738px" width="22" height="20" viewBox="0 0 22 20"><defs><linearGradient id="cpa" x1="0" y1="0" x2="0" y2="1"><stop offset="0" stop-color="#21b3f5"/><stop offset="0.45" stop-color="#3bbf6a"/><stop offset="1" stop-color="#f7d414"/></linearGradient><linearGradient id="cpb" x1="0" y1="0" x2="0" y2="1"><stop offset="0" stop-color="#b45ef0"/><stop offset="0.5" stop-color="#f25c9c"/><stop offset="1" stop-color="#ffb347"/></linearGradient></defs>
<path d="M5 0.5H15C16 0.5 16.8 1.2 17.2 2.2L18 4.5H12.5L8.8 14.5H2C0.8 14.5 0 13.5 0.4 12.3L3.3 2C3.6 1.1 4.2 0.5 5 0.5Z" fill="url(#cpa)"/>
<path d="M14.5 1 C15.5 1 16.5 1.5 17 2.5 L18 4.8 H12.8Z" fill="#1f6fe0"/>
<path d="M12.3 5.5H20C21.2 5.5 22 6.5 21.6 7.7L18.7 18C18.4 18.9 17.8 19.5 17 19.5H7C6 19.5 5.2 18.8 4.8 17.8L4 15.5H9.5Z" fill="url(#cpb)"/>
<path d="M4 15.5H9.3L8 19.2C7 19.2 5.5 18.5 5 17.5Z" fill="#f2542d"/>
</svg>
<!-- edge -->
<svg style="left:448px;top:736px" width="25" height="23" viewBox="0 0 25 23"><defs><linearGradient id="ed1" x1="0" y1="0" x2="1" y2="1"><stop offset="0" stop-color="#41d07a"/><stop offset="1" stop-color="#1a8bd6"/></linearGradient></defs><path d="M12.5 0C19 0 24.5 4.5 24.5 10.5C24.5 14 22 15.5 19 15.5C16 15.5 14 14 14 12C14 11 15 10.5 15 9.5C15 7 12.5 5.5 10 5.5C5 5.5 1.5 9.5 1 12C0 5 5.5 0 12.5 0Z" fill="url(#ed1)"/><path d="M1 12C1.5 9.5 5 5.5 10 5.5C12.5 5.5 15 7 15 9.5C13 9 9 10 8.5 14C8 18 11 22 15 22.5C8 24 1 19 1 12Z" fill="#1464b4"/><path d="M15 22.5C11 22 8 18 8.5 14C9 10 13 9 15 9.5C15 10.5 14 11 14 12C14 14 16 15.5 19 15.5C21 15.5 23 14.5 24 13.5C23 18.5 19 22 15 22.5Z" fill="#2fa0e6"/></svg>
<!-- explorer -->
<svg style="left:498px;top:739px" width="22" height="18" viewBox="0 0 22 18"><path d="M0 1.5C0 0.7 0.7 0 1.5 0H7.5L9.5 2H20.5C21.3 2 22 2.7 22 3.5V16.5C22 17.3 21.3 18 20.5 18H1.5C0.7 18 0 17.3 0 16.5Z" fill="#e8a81c"/><path d="M0 5H22V16.5C22 17.3 21.3 18 20.5 18H1.5C0.7 18 0 17.3 0 16.5Z" fill="#f8d160"/><path d="M5 18V12.5C5 11.5 5.5 11 6.5 11H15.5C16.5 11 17 11.5 17 12.5V18H14V14H8V18Z" fill="#2f8ee0"/></svg>
<!-- store -->
<svg style="left:546px;top:736px" width="24" height="24" viewBox="0 0 24 24"><path d="M7.5 6V3.5C7.5 1.5 9.5 0.5 12 0.5C14.5 0.5 16.5 1.5 16.5 3.5V6" stroke="#2aa3e8" stroke-width="1.8" fill="none"/><path d="M0.5 5.5H23.5V21.5C23.5 22.6 22.6 23.5 21.5 23.5H2.5C1.4 23.5 0.5 22.6 0.5 21.5Z" fill="#f4f4f4"/><path d="M0.5 5.5H23.5V8H0.5Z" fill="#36a7ea"/><rect x="7" y="10" width="4.5" height="4.5" fill="#f25022"/><rect x="12.5" y="10" width="4.5" height="4.5" fill="#7fba00"/><rect x="7" y="15.5" width="4.5" height="4.5" fill="#00a4ef"/><rect x="12.5" y="15.5" width="4.5" height="4.5" fill="#ffb900"/></svg>
<!-- outlook -->
<svg style="left:595px;top:737px" width="25" height="22" viewBox="0 0 25 22"><path d="M9 0H23C24 0 25 1 25 2V16C25 17 24 18 23 18H9Z" fill="#0f78d4"/><path d="M9 0H25V9H9Z" fill="#28a8ea"/><path d="M6 9L25 9V20C25 21 24 22 23 22H8C7 22 6 21 6 20Z" fill="#50d9ff" opacity="0.85"/><path d="M6 22L25 10V20C25 21 24 22 23 22Z" fill="#1490df"/><rect x="0" y="4" width="13" height="14" rx="1.5" fill="#0a5fb0"/><ellipse cx="6.5" cy="11" rx="3.3" ry="4" stroke="#fff" stroke-width="1.8" fill="none"/></svg>
<!-- ps active -->
<div class="a" style="left:632px;top:728px;width:48px;height:37px;background:#5a5048"></div>
<div class="a" style="left:645px;top:737px;width:22px;height:21px;background:#001e36;border-radius:4px"></div>
<div class="t" style="top:742.42px;font-size:12.5px;line-height:1;left:648.5px;color:#31a8ff;font-weight:bold;transform:scaleX(0.9806);transform-origin:0 0">Ps</div>
<!-- firefox -->
<svg style="left:693px;top:735px" width="24" height="24" viewBox="0 0 24 24"><defs><radialGradient id="ff1" cx="0.7" cy="0.2" r="0.9"><stop offset="0" stop-color="#ffe34a"/><stop offset="0.4" stop-color="#ff8a1f"/><stop offset="0.8" stop-color="#f23b5a"/><stop offset="1" stop-color="#c51f7a"/></radialGradient></defs><path d="M12 23.5C5.5 23.5 0.5 18.5 0.5 12.5C0.5 9 2 6 3.5 4.5C3.5 6 4 7 5 7.5C6 5 8 3.5 10 3C9 4.5 9.5 6 10.5 6C13 6 16 3.5 16 0.5C21 2.5 23.5 7 23.5 12C23.5 18.5 18.5 23.5 12 23.5Z" fill="url(#ff1)"/><circle cx="12.5" cy="13" r="5.5" fill="#7b3fc4"/><path d="M7 11C9 8 13 7.5 15.5 9C12 8.5 9.5 10 9.5 13C9.5 15 11 16.5 13 16.5C16 16.5 18 14 18 11C19 14 17.5 19 12.5 19C8.5 19 6 15.5 7 11Z" fill="#ff9a24"/></svg>
<!-- word -->
<svg style="left:742px;top:737px" width="25" height="21" viewBox="0 0 25 21"><path d="M6 0H23.5C24.3 0 25 0.7 25 1.5V19.5C25 20.3 24.3 21 23.5 21H7.5C6.7 21 6 20.3 6 19.5Z" fill="#41a5ee"/><path d="M6 5.5H25V15.5H6Z" fill="#2b7cd3"/><path d="M6 10.5H25V15.5H6Z" fill="#185abd"/><path d="M6 15.5H25V19.5C25 20.3 24.3 21 23.5 21H7.5C6.7 21 6 20.3 6 19.5Z" fill="#103f91"/><rect x="0" y="4" width="13" height="13" rx="1.5" fill="#185abd"/><path d="M2.2 7L3.8 14H5L6.5 9L8 14H9.2L10.8 7H9.5L8.5 11.8L7.1 7H5.9L4.5 11.8L3.5 7Z" fill="#fff"/></svg>
<!-- capcut -->
<div class="a" style="left:792px;top:737px;width:22px;height:21px;background:#fff;border-radius:5px"></div>
<svg style="left:796px;top:742px" width="14" height="11" viewBox="0 0 14 11"><path d="M0.5 1.5H13.5V3.5L3 8V9.5H13.5M0.5 9.5V7.5L11 3" stroke="#111" stroke-width="1.6" fill="none" stroke-linejoin="round"/></svg>
<!-- vlc -->
<svg style="left:842px;top:736px" width="21" height="23" viewBox="0 0 21 23"><path d="M8 0.5H13L19 19H2Z" fill="#f08a0c"/><path d="M6.5 5H14.5L15.5 8.5H5.5Z M4.8 11H16.2L17.2 14.5H3.8Z" fill="#f5f5f5"/><path d="M0.5 18.5H20.5V21C20.5 22 20 22.5 19 22.5H2C1 22.5 0.5 22 0.5 21Z" fill="#f08a0c"/><path d="M2 18.5H19V19.5H2Z" fill="#c86a00"/></svg>
<!-- underlines -->
<div class="a" style="left:440px;top:765px;width:40px;height:3px;background:#7fb9e8"></div>
<div class="a" style="left:489px;top:765px;width:40px;height:3px;background:#7fb9e8"></div>
<div class="a" style="left:632px;top:765px;width:48px;height:3px;background:#7fb9e8"></div>
<div class="a" style="left:685px;top:765px;width:40px;height:3px;background:#7fb9e8"></div>
<div class="a" style="left:734px;top:765px;width:40px;height:3px;background:#7fb9e8"></div>
<div class="a" style="left:783px;top:765px;width:40px;height:3px;background:#7fb9e8"></div>
<div class="a" style="left:832px;top:765px;width:40px;height:3px;background:#7fb9e8"></div>
<!-- weather -->
<svg style="left:950px;top:737px" width="26" height="20" viewBox="0 0 26 20"><defs><linearGradient id="cl" x1="0" y1="0" x2="0" y2="1"><stop offset="0" stop-color="#e8f0fa"/><stop offset="1" stop-color="#a9c2e6"/></linearGradient></defs><path d="M5 19C2 19 0.5 17 0.5 15C0.5 12.5 2.5 11 4.5 11C5 7 8 4.5 12 4.5C16 4.5 18.5 7 19.5 9.5C22.5 9.5 25 11.5 25 14.5C25 17 23 19 20.5 19Z" fill="url(#cl)"/><circle cx="19.5" cy="5" r="5" fill="#d03a2f"/><text x="17.6" y="8.3" font-size="8" fill="#fff" font-family="Liberation Sans">1</text></svg>
<div class="t" style="top:741.73px;font-size:14.5px;line-height:1;left:983px;color:#f2f2f2;transform:scaleX(0.9041);transform-origin:0 0">27°C</div>
<div class="t" style="top:741.73px;font-size:14.5px;line-height:1;left:1021.7px;color:#f2f2f2;transform:scaleX(0.9682);transform-origin:0 0">Nublado</div>
<svg style="left:1099px;top:744px" width="13" height="8" viewBox="0 0 13 8"><path d="M0.7 7.3L6.5 1L12.3 7.3" stroke="#f0f0f0" stroke-width="1.3" fill="none"/></svg>
<svg style="left:1122px;top:740px" width="14" height="16" viewBox="0 0 14 16"><path d="M3 2.5C3 1.5 4 0.7 6 0.7C8 0.7 9 1.5 9 2.5M3 13.5C3 14.5 4 15.3 6 15.3C8 15.3 9 14.5 9 13.5" stroke="#f0f0f0" stroke-width="1.1" fill="none"/><rect x="0.7" y="4" width="9" height="8" rx="1.5" stroke="#f0f0f0" stroke-width="1.2" fill="none"/><path d="M10 6.5L13.3 4.5V11.5L10 9.5" stroke="#f0f0f0" stroke-width="1.1" fill="none"/></svg>
<svg style="left:1144px;top:740px" width="18" height="16" viewBox="0 0 18 16"><path d="M0.7 5H4L8.5 1V15L4 11H0.7Z" stroke="#f0f0f0" stroke-width="1.2" fill="none"/><path d="M11 5C12.3 6.5 12.3 9.5 11 11M13.5 3C15.7 5.5 15.7 10.5 13.5 13M15.8 1C19 4.5 19 11.5 15.8 15" stroke="#f0f0f0" stroke-width="1.1" fill="none" opacity="0.9"/></svg>
<svg style="left:1169px;top:740px" width="19" height="18" viewBox="0 0 19 18"><path d="M1 3L17 0.7V14L1 15Z" stroke="#f0f0f0" stroke-width="1.2" fill="none"/><path d="M6 9C6 6.5 8 5 10 5.5M12 7C12 9.5 10 11 8 10.5M9.5 4.3L10.5 5.5L9.3 6.5M8.5 11.7L7.5 10.5L8.7 9.5" stroke="#f0f0f0" stroke-width="1.1" fill="none"/><circle cx="15" cy="14.5" r="3.3" fill="#f7931e"/></svg>
<svg style="left:1192px;top:740px" width="18" height="16" viewBox="0 0 18 16"><rect x="4" y="2.5" width="13.3" height="9" stroke="#f0f0f0" stroke-width="1.1" fill="none"/><path d="M10.7 11.5V14.5M6.5 15.3H15" stroke="#f0f0f0" stroke-width="1.1"/><rect x="0.6" y="0.6" width="4.5" height="6" stroke="#f0f0f0" stroke-width="1" fill="#3d3329"/><path d="M2.8 6.6V9" stroke="#f0f0f0" stroke-width="1"/></svg>
<div class="t" style="top:742.34px;font-size:12px;line-height:1;left:1221.3px;color:#f2f2f2;transform:scaleX(0.7495);transform-origin:0 0">ESP</div>
<div class="t" style="top:733.42px;font-size:12.5px;line-height:1;left:1267.4px;color:#f2f2f2;transform:scaleX(0.8729);transform-origin:0 0">11:56</div>
<div class="t" style="top:750.42px;font-size:12.5px;line-height:1;left:1255px;color:#f2f2f2;transform:scaleX(0.9405);transform-origin:0 0">20/5/2025</div>
<svg style="left:1324px;top:739px" width="26" height="26" viewBox="0 0 26 26"><path d="M0.7 0.7H16.3V12.3H6L2.5 15.5V12.3H0.7Z" fill="#f5f5f5"/><path d="M3.5 4H13.5M3.5 6.5H13.5M3.5 9H10" stroke="#3d3329" stroke-width="1"/><circle cx="17.5" cy="17.5" r="7.5" fill="#3d3329" stroke="#9a9a9a" stroke-width="1"/><text x="13.3" y="22.5" font-size="13" fill="#f5f5f5" font-family="Liberation Sans">2</text></svg>


</body></html>
